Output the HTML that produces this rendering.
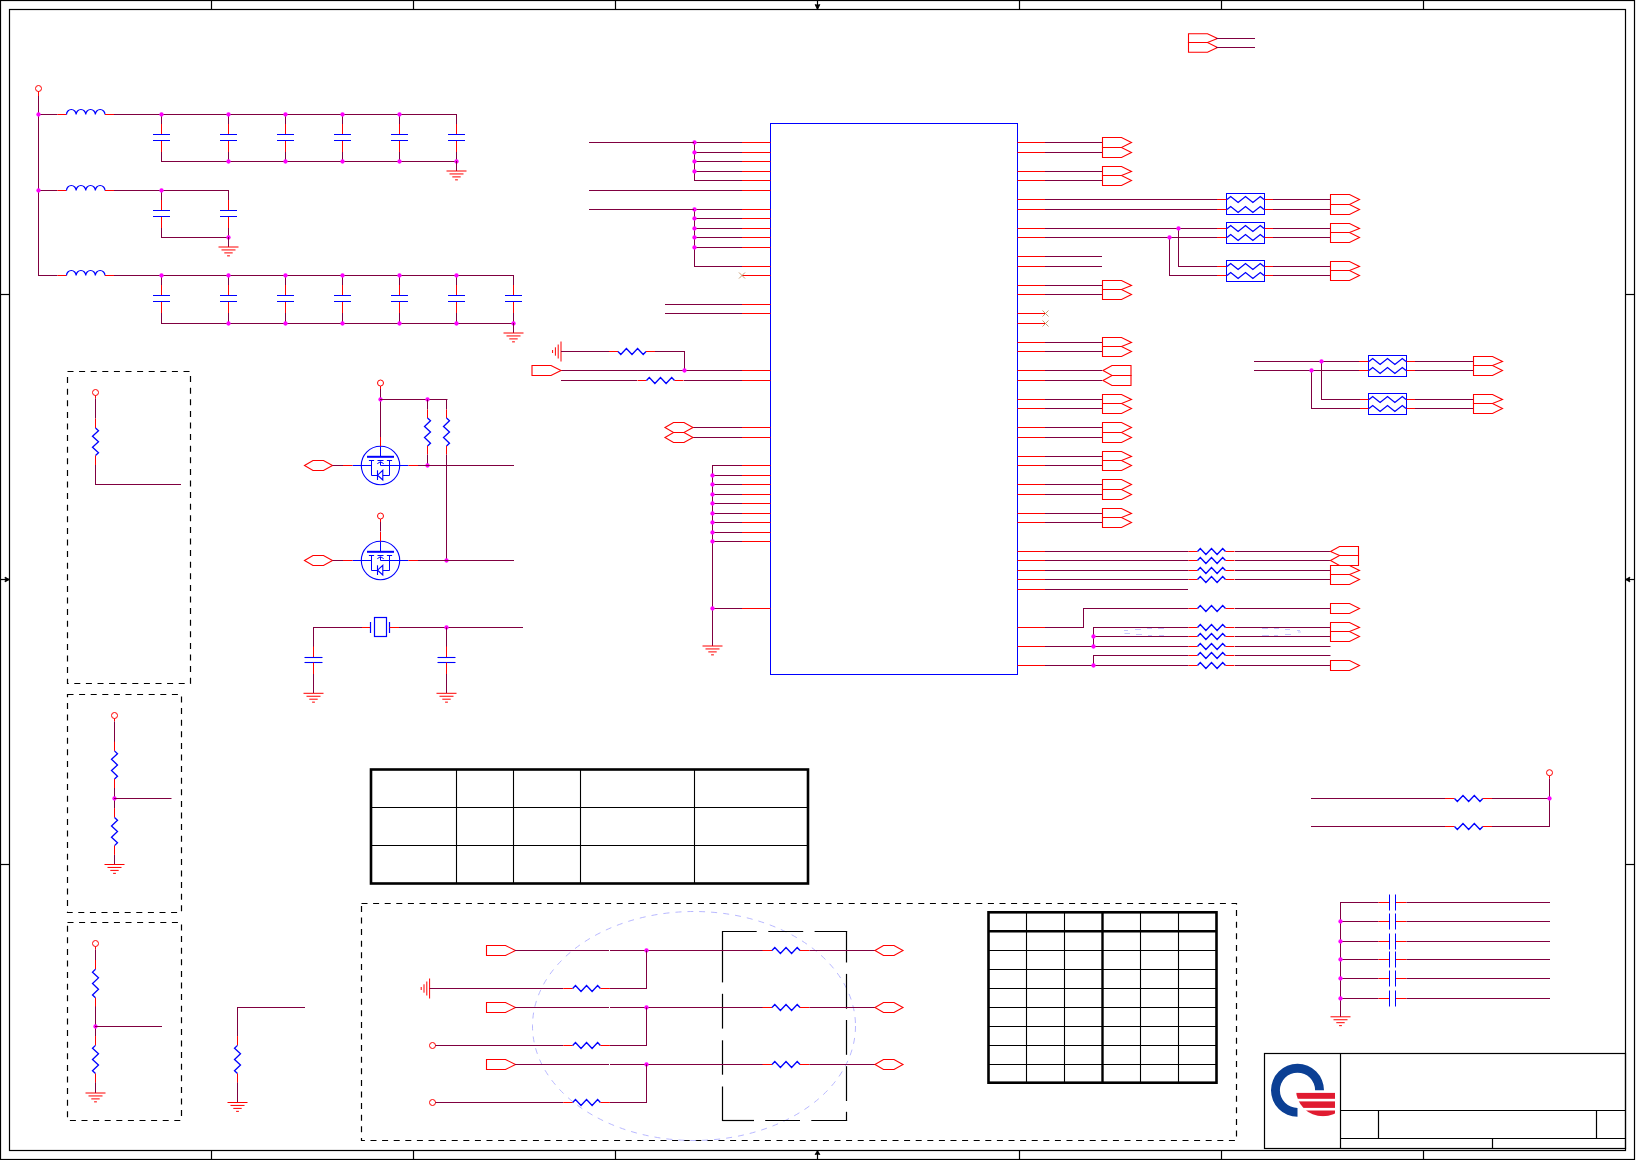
<!DOCTYPE html>
<html><head><meta charset="utf-8"><title>Schematic</title>
<style>html,body{margin:0;padding:0;background:#fff;width:1636px;height:1160px;overflow:hidden}
svg{display:block}</style></head><body>
<svg width="1636" height="1160" viewBox="0 0 1636 1160"><rect x="0.5" y="0.5" width="1634" height="1159" stroke="#000000" stroke-width="1.2" fill="none"/>
<rect x="9.5" y="9.5" width="1616" height="1141" stroke="#000000" stroke-width="1.2" fill="none"/>
<line x1="211.5" y1="0" x2="211.5" y2="10" stroke="#000000" stroke-width="1.2"/>
<line x1="211.5" y1="1150" x2="211.5" y2="1160" stroke="#000000" stroke-width="1.2"/>
<line x1="413.5" y1="0" x2="413.5" y2="10" stroke="#000000" stroke-width="1.2"/>
<line x1="413.5" y1="1150" x2="413.5" y2="1160" stroke="#000000" stroke-width="1.2"/>
<line x1="615.5" y1="0" x2="615.5" y2="10" stroke="#000000" stroke-width="1.2"/>
<line x1="615.5" y1="1150" x2="615.5" y2="1160" stroke="#000000" stroke-width="1.2"/>
<line x1="1019.5" y1="0" x2="1019.5" y2="10" stroke="#000000" stroke-width="1.2"/>
<line x1="1019.5" y1="1150" x2="1019.5" y2="1160" stroke="#000000" stroke-width="1.2"/>
<line x1="1221.5" y1="0" x2="1221.5" y2="10" stroke="#000000" stroke-width="1.2"/>
<line x1="1221.5" y1="1150" x2="1221.5" y2="1160" stroke="#000000" stroke-width="1.2"/>
<line x1="1423.5" y1="0" x2="1423.5" y2="10" stroke="#000000" stroke-width="1.2"/>
<line x1="1423.5" y1="1150" x2="1423.5" y2="1160" stroke="#000000" stroke-width="1.2"/>
<line x1="0" y1="294.5" x2="10" y2="294.5" stroke="#000000" stroke-width="1.2"/>
<line x1="1625" y1="294.5" x2="1635" y2="294.5" stroke="#000000" stroke-width="1.2"/>
<line x1="0" y1="864.5" x2="10" y2="864.5" stroke="#000000" stroke-width="1.2"/>
<line x1="1625" y1="864.5" x2="1635" y2="864.5" stroke="#000000" stroke-width="1.2"/>
<line x1="817.5" y1="0" x2="817.5" y2="9" stroke="#000000" stroke-width="1.2"/>
<polygon points="815.1,4.6 817.5,5.1 819.9,4.6 817.5,9.5" stroke="#000000" stroke-width="0.8" fill="#000000" stroke-linejoin="miter"/>
<line x1="817.5" y1="1150" x2="817.5" y2="1160" stroke="#000000" stroke-width="1.2"/>
<polygon points="815.1,1154.6 817.5,1154.1 819.9,1154.6 817.5,1150.5" stroke="#000000" stroke-width="0.8" fill="#000000" stroke-linejoin="miter"/>
<line x1="0" y1="579.5" x2="9" y2="579.5" stroke="#000000" stroke-width="1.2"/>
<polygon points="5,577.1 5.5,579.5 5,581.9 9.5,579.5" stroke="#000000" stroke-width="0.8" fill="#000000" stroke-linejoin="miter"/>
<line x1="1625" y1="579.5" x2="1635" y2="579.5" stroke="#000000" stroke-width="1.2"/>
<polygon points="1629.8,577.1 1629.3,579.5 1629.8,581.9 1625.5,579.5" stroke="#000000" stroke-width="0.8" fill="#000000" stroke-linejoin="miter"/>
<circle cx="38.5" cy="88.5" r="3" stroke="#ff0000" stroke-width="1" fill="none"/>
<line x1="38.5" y1="91.5" x2="38.5" y2="94.5" stroke="#ff0000" stroke-width="1"/>
<line x1="38.5" y1="91.5" x2="38.5" y2="96" stroke="#ff0000" stroke-width="1"/>
<line x1="38.5" y1="96" x2="38.5" y2="276" stroke="#800040" stroke-width="1"/>
<line x1="38" y1="114.5" x2="57.5" y2="114.5" stroke="#800040" stroke-width="1"/>
<line x1="57.5" y1="114.5" x2="66.5" y2="114.5" stroke="#ff0000" stroke-width="1"/>
<path d="M66.5 114.5 a4.81 5 0 0 1 9.62 0 a4.81 5 0 0 1 9.62 0 a4.81 5 0 0 1 9.62 0 a4.81 5 0 0 1 9.62 0" stroke="#0000ff" fill="none" stroke-width="1.2"/>
<line x1="105" y1="114.5" x2="114" y2="114.5" stroke="#ff0000" stroke-width="1"/>
<line x1="114" y1="114.5" x2="457" y2="114.5" stroke="#800040" stroke-width="1"/>
<line x1="161" y1="161.5" x2="457" y2="161.5" stroke="#800040" stroke-width="1"/>
<line x1="161.5" y1="114.5" x2="161.5" y2="124" stroke="#800040" stroke-width="1"/>
<line x1="161.5" y1="124" x2="161.5" y2="134" stroke="#ff0000" stroke-width="1"/>
<line x1="153" y1="134.5" x2="170" y2="134.5" stroke="#0000ff" stroke-width="1"/>
<line x1="153" y1="140.5" x2="170" y2="140.5" stroke="#0000ff" stroke-width="1"/>
<line x1="161.5" y1="141" x2="161.5" y2="152" stroke="#ff0000" stroke-width="1"/>
<line x1="161.5" y1="152" x2="161.5" y2="161.5" stroke="#800040" stroke-width="1"/>
<line x1="228.5" y1="114.5" x2="228.5" y2="124" stroke="#800040" stroke-width="1"/>
<line x1="228.5" y1="124" x2="228.5" y2="134" stroke="#ff0000" stroke-width="1"/>
<line x1="220" y1="134.5" x2="237" y2="134.5" stroke="#0000ff" stroke-width="1"/>
<line x1="220" y1="140.5" x2="237" y2="140.5" stroke="#0000ff" stroke-width="1"/>
<line x1="228.5" y1="141" x2="228.5" y2="152" stroke="#ff0000" stroke-width="1"/>
<line x1="228.5" y1="152" x2="228.5" y2="161.5" stroke="#800040" stroke-width="1"/>
<line x1="285.5" y1="114.5" x2="285.5" y2="124" stroke="#800040" stroke-width="1"/>
<line x1="285.5" y1="124" x2="285.5" y2="134" stroke="#ff0000" stroke-width="1"/>
<line x1="277" y1="134.5" x2="294" y2="134.5" stroke="#0000ff" stroke-width="1"/>
<line x1="277" y1="140.5" x2="294" y2="140.5" stroke="#0000ff" stroke-width="1"/>
<line x1="285.5" y1="141" x2="285.5" y2="152" stroke="#ff0000" stroke-width="1"/>
<line x1="285.5" y1="152" x2="285.5" y2="161.5" stroke="#800040" stroke-width="1"/>
<line x1="342.5" y1="114.5" x2="342.5" y2="124" stroke="#800040" stroke-width="1"/>
<line x1="342.5" y1="124" x2="342.5" y2="134" stroke="#ff0000" stroke-width="1"/>
<line x1="334" y1="134.5" x2="351" y2="134.5" stroke="#0000ff" stroke-width="1"/>
<line x1="334" y1="140.5" x2="351" y2="140.5" stroke="#0000ff" stroke-width="1"/>
<line x1="342.5" y1="141" x2="342.5" y2="152" stroke="#ff0000" stroke-width="1"/>
<line x1="342.5" y1="152" x2="342.5" y2="161.5" stroke="#800040" stroke-width="1"/>
<line x1="399.5" y1="114.5" x2="399.5" y2="124" stroke="#800040" stroke-width="1"/>
<line x1="399.5" y1="124" x2="399.5" y2="134" stroke="#ff0000" stroke-width="1"/>
<line x1="391" y1="134.5" x2="408" y2="134.5" stroke="#0000ff" stroke-width="1"/>
<line x1="391" y1="140.5" x2="408" y2="140.5" stroke="#0000ff" stroke-width="1"/>
<line x1="399.5" y1="141" x2="399.5" y2="152" stroke="#ff0000" stroke-width="1"/>
<line x1="399.5" y1="152" x2="399.5" y2="161.5" stroke="#800040" stroke-width="1"/>
<line x1="456.5" y1="114.5" x2="456.5" y2="124" stroke="#800040" stroke-width="1"/>
<line x1="456.5" y1="124" x2="456.5" y2="134" stroke="#ff0000" stroke-width="1"/>
<line x1="448" y1="134.5" x2="465" y2="134.5" stroke="#0000ff" stroke-width="1"/>
<line x1="448" y1="140.5" x2="465" y2="140.5" stroke="#0000ff" stroke-width="1"/>
<line x1="456.5" y1="141" x2="456.5" y2="152" stroke="#ff0000" stroke-width="1"/>
<line x1="456.5" y1="152" x2="456.5" y2="161.5" stroke="#800040" stroke-width="1"/>
<circle cx="161.5" cy="114.5" r="2.15" fill="#ff00ff"/>
<circle cx="228.5" cy="114.5" r="2.15" fill="#ff00ff"/>
<circle cx="285.5" cy="114.5" r="2.15" fill="#ff00ff"/>
<circle cx="342.5" cy="114.5" r="2.15" fill="#ff00ff"/>
<circle cx="399.5" cy="114.5" r="2.15" fill="#ff00ff"/>
<circle cx="228.5" cy="161.5" r="2.15" fill="#ff00ff"/>
<circle cx="285.5" cy="161.5" r="2.15" fill="#ff00ff"/>
<circle cx="342.5" cy="161.5" r="2.15" fill="#ff00ff"/>
<circle cx="399.5" cy="161.5" r="2.15" fill="#ff00ff"/>
<circle cx="456.5" cy="161.5" r="2.15" fill="#ff00ff"/>
<line x1="456.5" y1="161" x2="456.5" y2="171" stroke="#800040" stroke-width="1"/>
<line x1="446.5" y1="171" x2="466.5" y2="171" stroke="#ff0000" stroke-width="1"/>
<line x1="449.5" y1="173.95" x2="463.5" y2="173.95" stroke="#ff0000" stroke-width="1"/>
<line x1="452.3" y1="176.9" x2="460.7" y2="176.9" stroke="#ff0000" stroke-width="1"/>
<line x1="455.1" y1="179.85" x2="457.9" y2="179.85" stroke="#ff0000" stroke-width="1"/>
<line x1="38" y1="190.5" x2="57.5" y2="190.5" stroke="#800040" stroke-width="1"/>
<line x1="57.5" y1="190.5" x2="66.5" y2="190.5" stroke="#ff0000" stroke-width="1"/>
<path d="M66.5 190.5 a4.81 5 0 0 1 9.62 0 a4.81 5 0 0 1 9.62 0 a4.81 5 0 0 1 9.62 0 a4.81 5 0 0 1 9.62 0" stroke="#0000ff" fill="none" stroke-width="1.2"/>
<line x1="105" y1="190.5" x2="114" y2="190.5" stroke="#ff0000" stroke-width="1"/>
<line x1="114" y1="190.5" x2="229" y2="190.5" stroke="#800040" stroke-width="1"/>
<line x1="161" y1="237.5" x2="229" y2="237.5" stroke="#800040" stroke-width="1"/>
<line x1="161.5" y1="190.5" x2="161.5" y2="200" stroke="#800040" stroke-width="1"/>
<line x1="161.5" y1="200" x2="161.5" y2="210" stroke="#ff0000" stroke-width="1"/>
<line x1="153" y1="210.5" x2="170" y2="210.5" stroke="#0000ff" stroke-width="1"/>
<line x1="153" y1="216.5" x2="170" y2="216.5" stroke="#0000ff" stroke-width="1"/>
<line x1="161.5" y1="217" x2="161.5" y2="228" stroke="#ff0000" stroke-width="1"/>
<line x1="161.5" y1="228" x2="161.5" y2="237.5" stroke="#800040" stroke-width="1"/>
<line x1="228.5" y1="190.5" x2="228.5" y2="200" stroke="#800040" stroke-width="1"/>
<line x1="228.5" y1="200" x2="228.5" y2="210" stroke="#ff0000" stroke-width="1"/>
<line x1="220" y1="210.5" x2="237" y2="210.5" stroke="#0000ff" stroke-width="1"/>
<line x1="220" y1="216.5" x2="237" y2="216.5" stroke="#0000ff" stroke-width="1"/>
<line x1="228.5" y1="217" x2="228.5" y2="228" stroke="#ff0000" stroke-width="1"/>
<line x1="228.5" y1="228" x2="228.5" y2="237.5" stroke="#800040" stroke-width="1"/>
<circle cx="161.5" cy="190.5" r="2.15" fill="#ff00ff"/>
<circle cx="228.5" cy="237.5" r="2.15" fill="#ff00ff"/>
<line x1="228.5" y1="237" x2="228.5" y2="247" stroke="#800040" stroke-width="1"/>
<line x1="218.5" y1="247" x2="238.5" y2="247" stroke="#ff0000" stroke-width="1"/>
<line x1="221.5" y1="249.95" x2="235.5" y2="249.95" stroke="#ff0000" stroke-width="1"/>
<line x1="224.3" y1="252.9" x2="232.7" y2="252.9" stroke="#ff0000" stroke-width="1"/>
<line x1="227.1" y1="255.85" x2="229.9" y2="255.85" stroke="#ff0000" stroke-width="1"/>
<line x1="38" y1="275.5" x2="57.5" y2="275.5" stroke="#800040" stroke-width="1"/>
<line x1="57.5" y1="275.5" x2="66.5" y2="275.5" stroke="#ff0000" stroke-width="1"/>
<path d="M66.5 275.5 a4.81 5 0 0 1 9.62 0 a4.81 5 0 0 1 9.62 0 a4.81 5 0 0 1 9.62 0 a4.81 5 0 0 1 9.62 0" stroke="#0000ff" fill="none" stroke-width="1.2"/>
<line x1="105" y1="275.5" x2="114" y2="275.5" stroke="#ff0000" stroke-width="1"/>
<line x1="114" y1="275.5" x2="514" y2="275.5" stroke="#800040" stroke-width="1"/>
<line x1="161" y1="323.5" x2="514" y2="323.5" stroke="#800040" stroke-width="1"/>
<line x1="161.5" y1="275.5" x2="161.5" y2="285" stroke="#800040" stroke-width="1"/>
<line x1="161.5" y1="285" x2="161.5" y2="295" stroke="#ff0000" stroke-width="1"/>
<line x1="153" y1="295.5" x2="170" y2="295.5" stroke="#0000ff" stroke-width="1"/>
<line x1="153" y1="301.5" x2="170" y2="301.5" stroke="#0000ff" stroke-width="1"/>
<line x1="161.5" y1="302" x2="161.5" y2="313" stroke="#ff0000" stroke-width="1"/>
<line x1="161.5" y1="313" x2="161.5" y2="323.5" stroke="#800040" stroke-width="1"/>
<line x1="228.5" y1="275.5" x2="228.5" y2="285" stroke="#800040" stroke-width="1"/>
<line x1="228.5" y1="285" x2="228.5" y2="295" stroke="#ff0000" stroke-width="1"/>
<line x1="220" y1="295.5" x2="237" y2="295.5" stroke="#0000ff" stroke-width="1"/>
<line x1="220" y1="301.5" x2="237" y2="301.5" stroke="#0000ff" stroke-width="1"/>
<line x1="228.5" y1="302" x2="228.5" y2="313" stroke="#ff0000" stroke-width="1"/>
<line x1="228.5" y1="313" x2="228.5" y2="323.5" stroke="#800040" stroke-width="1"/>
<line x1="285.5" y1="275.5" x2="285.5" y2="285" stroke="#800040" stroke-width="1"/>
<line x1="285.5" y1="285" x2="285.5" y2="295" stroke="#ff0000" stroke-width="1"/>
<line x1="277" y1="295.5" x2="294" y2="295.5" stroke="#0000ff" stroke-width="1"/>
<line x1="277" y1="301.5" x2="294" y2="301.5" stroke="#0000ff" stroke-width="1"/>
<line x1="285.5" y1="302" x2="285.5" y2="313" stroke="#ff0000" stroke-width="1"/>
<line x1="285.5" y1="313" x2="285.5" y2="323.5" stroke="#800040" stroke-width="1"/>
<line x1="342.5" y1="275.5" x2="342.5" y2="285" stroke="#800040" stroke-width="1"/>
<line x1="342.5" y1="285" x2="342.5" y2="295" stroke="#ff0000" stroke-width="1"/>
<line x1="334" y1="295.5" x2="351" y2="295.5" stroke="#0000ff" stroke-width="1"/>
<line x1="334" y1="301.5" x2="351" y2="301.5" stroke="#0000ff" stroke-width="1"/>
<line x1="342.5" y1="302" x2="342.5" y2="313" stroke="#ff0000" stroke-width="1"/>
<line x1="342.5" y1="313" x2="342.5" y2="323.5" stroke="#800040" stroke-width="1"/>
<line x1="399.5" y1="275.5" x2="399.5" y2="285" stroke="#800040" stroke-width="1"/>
<line x1="399.5" y1="285" x2="399.5" y2="295" stroke="#ff0000" stroke-width="1"/>
<line x1="391" y1="295.5" x2="408" y2="295.5" stroke="#0000ff" stroke-width="1"/>
<line x1="391" y1="301.5" x2="408" y2="301.5" stroke="#0000ff" stroke-width="1"/>
<line x1="399.5" y1="302" x2="399.5" y2="313" stroke="#ff0000" stroke-width="1"/>
<line x1="399.5" y1="313" x2="399.5" y2="323.5" stroke="#800040" stroke-width="1"/>
<line x1="456.5" y1="275.5" x2="456.5" y2="285" stroke="#800040" stroke-width="1"/>
<line x1="456.5" y1="285" x2="456.5" y2="295" stroke="#ff0000" stroke-width="1"/>
<line x1="448" y1="295.5" x2="465" y2="295.5" stroke="#0000ff" stroke-width="1"/>
<line x1="448" y1="301.5" x2="465" y2="301.5" stroke="#0000ff" stroke-width="1"/>
<line x1="456.5" y1="302" x2="456.5" y2="313" stroke="#ff0000" stroke-width="1"/>
<line x1="456.5" y1="313" x2="456.5" y2="323.5" stroke="#800040" stroke-width="1"/>
<line x1="513.5" y1="275.5" x2="513.5" y2="285" stroke="#800040" stroke-width="1"/>
<line x1="513.5" y1="285" x2="513.5" y2="295" stroke="#ff0000" stroke-width="1"/>
<line x1="505" y1="295.5" x2="522" y2="295.5" stroke="#0000ff" stroke-width="1"/>
<line x1="505" y1="301.5" x2="522" y2="301.5" stroke="#0000ff" stroke-width="1"/>
<line x1="513.5" y1="302" x2="513.5" y2="313" stroke="#ff0000" stroke-width="1"/>
<line x1="513.5" y1="313" x2="513.5" y2="323.5" stroke="#800040" stroke-width="1"/>
<circle cx="161.5" cy="275.5" r="2.15" fill="#ff00ff"/>
<circle cx="228.5" cy="275.5" r="2.15" fill="#ff00ff"/>
<circle cx="285.5" cy="275.5" r="2.15" fill="#ff00ff"/>
<circle cx="342.5" cy="275.5" r="2.15" fill="#ff00ff"/>
<circle cx="399.5" cy="275.5" r="2.15" fill="#ff00ff"/>
<circle cx="456.5" cy="275.5" r="2.15" fill="#ff00ff"/>
<circle cx="228.5" cy="323.5" r="2.15" fill="#ff00ff"/>
<circle cx="285.5" cy="323.5" r="2.15" fill="#ff00ff"/>
<circle cx="342.5" cy="323.5" r="2.15" fill="#ff00ff"/>
<circle cx="399.5" cy="323.5" r="2.15" fill="#ff00ff"/>
<circle cx="456.5" cy="323.5" r="2.15" fill="#ff00ff"/>
<circle cx="513.5" cy="323.5" r="2.15" fill="#ff00ff"/>
<line x1="513.5" y1="323" x2="513.5" y2="333" stroke="#800040" stroke-width="1"/>
<line x1="503.5" y1="333" x2="523.5" y2="333" stroke="#ff0000" stroke-width="1"/>
<line x1="506.5" y1="335.95" x2="520.5" y2="335.95" stroke="#ff0000" stroke-width="1"/>
<line x1="509.3" y1="338.9" x2="517.7" y2="338.9" stroke="#ff0000" stroke-width="1"/>
<line x1="512.1" y1="341.85" x2="514.9" y2="341.85" stroke="#ff0000" stroke-width="1"/>
<circle cx="38.5" cy="114.5" r="2.15" fill="#ff00ff"/>
<circle cx="38.5" cy="190.5" r="2.15" fill="#ff00ff"/>
<rect x="770.5" y="123.5" width="247" height="551" stroke="#0000ff" stroke-width="1" fill="none"/>
<line x1="742" y1="142.5" x2="770.5" y2="142.5" stroke="#ff0000" stroke-width="1"/>
<line x1="742" y1="152.5" x2="770.5" y2="152.5" stroke="#ff0000" stroke-width="1"/>
<line x1="742" y1="161.5" x2="770.5" y2="161.5" stroke="#ff0000" stroke-width="1"/>
<line x1="742" y1="171.5" x2="770.5" y2="171.5" stroke="#ff0000" stroke-width="1"/>
<line x1="742" y1="180.5" x2="770.5" y2="180.5" stroke="#ff0000" stroke-width="1"/>
<line x1="742" y1="190.5" x2="770.5" y2="190.5" stroke="#ff0000" stroke-width="1"/>
<line x1="742" y1="209.5" x2="770.5" y2="209.5" stroke="#ff0000" stroke-width="1"/>
<line x1="742" y1="218.5" x2="770.5" y2="218.5" stroke="#ff0000" stroke-width="1"/>
<line x1="742" y1="228.5" x2="770.5" y2="228.5" stroke="#ff0000" stroke-width="1"/>
<line x1="742" y1="237.5" x2="770.5" y2="237.5" stroke="#ff0000" stroke-width="1"/>
<line x1="742" y1="247.5" x2="770.5" y2="247.5" stroke="#ff0000" stroke-width="1"/>
<line x1="742" y1="266.5" x2="770.5" y2="266.5" stroke="#ff0000" stroke-width="1"/>
<line x1="742" y1="275.5" x2="770.5" y2="275.5" stroke="#ff0000" stroke-width="1"/>
<line x1="739" y1="272.5" x2="745" y2="278.5" stroke="#c09060" stroke-width="0.9"/>
<line x1="739" y1="278.5" x2="745" y2="272.5" stroke="#c09060" stroke-width="0.9"/>
<line x1="694" y1="142.5" x2="742" y2="142.5" stroke="#800040" stroke-width="1"/>
<line x1="694" y1="152.5" x2="742" y2="152.5" stroke="#800040" stroke-width="1"/>
<line x1="694" y1="161.5" x2="742" y2="161.5" stroke="#800040" stroke-width="1"/>
<line x1="694" y1="171.5" x2="742" y2="171.5" stroke="#800040" stroke-width="1"/>
<line x1="694" y1="180.5" x2="742" y2="180.5" stroke="#800040" stroke-width="1"/>
<line x1="694.5" y1="142.5" x2="694.5" y2="181" stroke="#800040" stroke-width="1"/>
<circle cx="694.5" cy="142.5" r="2.15" fill="#ff00ff"/>
<circle cx="694.5" cy="152.5" r="2.15" fill="#ff00ff"/>
<circle cx="694.5" cy="161.5" r="2.15" fill="#ff00ff"/>
<circle cx="694.5" cy="171.5" r="2.15" fill="#ff00ff"/>
<line x1="589" y1="142.5" x2="694" y2="142.5" stroke="#800040" stroke-width="1"/>
<line x1="589" y1="190.5" x2="742" y2="190.5" stroke="#800040" stroke-width="1"/>
<line x1="694" y1="209.5" x2="742" y2="209.5" stroke="#800040" stroke-width="1"/>
<line x1="694" y1="218.5" x2="742" y2="218.5" stroke="#800040" stroke-width="1"/>
<line x1="694" y1="228.5" x2="742" y2="228.5" stroke="#800040" stroke-width="1"/>
<line x1="694" y1="237.5" x2="742" y2="237.5" stroke="#800040" stroke-width="1"/>
<line x1="694" y1="247.5" x2="742" y2="247.5" stroke="#800040" stroke-width="1"/>
<line x1="694" y1="266.5" x2="742" y2="266.5" stroke="#800040" stroke-width="1"/>
<line x1="694.5" y1="209.5" x2="694.5" y2="267" stroke="#800040" stroke-width="1"/>
<circle cx="694.5" cy="209.5" r="2.15" fill="#ff00ff"/>
<circle cx="694.5" cy="218.5" r="2.15" fill="#ff00ff"/>
<circle cx="694.5" cy="228.5" r="2.15" fill="#ff00ff"/>
<circle cx="694.5" cy="237.5" r="2.15" fill="#ff00ff"/>
<circle cx="694.5" cy="247.5" r="2.15" fill="#ff00ff"/>
<line x1="589" y1="209.5" x2="694" y2="209.5" stroke="#800040" stroke-width="1"/>
<line x1="742" y1="304.5" x2="770.5" y2="304.5" stroke="#ff0000" stroke-width="1"/>
<line x1="665" y1="304.5" x2="742" y2="304.5" stroke="#800040" stroke-width="1"/>
<line x1="742" y1="313.5" x2="770.5" y2="313.5" stroke="#ff0000" stroke-width="1"/>
<line x1="665" y1="313.5" x2="742" y2="313.5" stroke="#800040" stroke-width="1"/>
<line x1="561" y1="341.5" x2="561" y2="361.5" stroke="#ff0000" stroke-width="1"/>
<line x1="558.2" y1="344.5" x2="558.2" y2="358.5" stroke="#ff0000" stroke-width="1"/>
<line x1="555.4" y1="347.3" x2="555.4" y2="355.7" stroke="#ff0000" stroke-width="1"/>
<line x1="552.6" y1="350" x2="552.6" y2="353" stroke="#ff0000" stroke-width="1"/>
<line x1="561" y1="351.5" x2="609" y2="351.5" stroke="#800040" stroke-width="1"/>
<line x1="609" y1="351.5" x2="618" y2="351.5" stroke="#ff0000" stroke-width="1"/>
<polyline points="618,351.5 620.8,354.5 626.4,348.5 632,354.5 637.6,348.5 643.2,354.5 646,351.5" stroke="#0000ff" stroke-width="1.3" fill="none" stroke-linejoin="miter"/>
<line x1="646" y1="351.5" x2="655" y2="351.5" stroke="#ff0000" stroke-width="1"/>
<line x1="655" y1="351.5" x2="685" y2="351.5" stroke="#800040" stroke-width="1"/>
<line x1="684.5" y1="351.5" x2="684.5" y2="370.5" stroke="#800040" stroke-width="1"/>
<line x1="742" y1="370.5" x2="770.5" y2="370.5" stroke="#ff0000" stroke-width="1"/>
<line x1="561" y1="370.5" x2="742" y2="370.5" stroke="#800040" stroke-width="1"/>
<polygon points="532,365.5 551,365.5 561,370.5 551,375.5 532,375.5" stroke="#ff0000" stroke-width="1.1" fill="none" stroke-linejoin="miter"/>
<circle cx="684.5" cy="370.5" r="2.15" fill="#ff00ff"/>
<line x1="742" y1="380.5" x2="770.5" y2="380.5" stroke="#ff0000" stroke-width="1"/>
<line x1="561" y1="380.5" x2="637" y2="380.5" stroke="#800040" stroke-width="1"/>
<line x1="637.5" y1="380.5" x2="646.5" y2="380.5" stroke="#ff0000" stroke-width="1"/>
<polyline points="646.5,380.5 649.3,377.5 654.9,383.5 660.5,377.5 666.1,383.5 671.7,377.5 674.5,380.5" stroke="#0000ff" stroke-width="1.3" fill="none" stroke-linejoin="miter"/>
<line x1="674.5" y1="380.5" x2="683.5" y2="380.5" stroke="#ff0000" stroke-width="1"/>
<line x1="684" y1="380.5" x2="742" y2="380.5" stroke="#800040" stroke-width="1"/>
<line x1="742" y1="427.5" x2="770.5" y2="427.5" stroke="#ff0000" stroke-width="1"/>
<line x1="693" y1="427.5" x2="742" y2="427.5" stroke="#800040" stroke-width="1"/>
<line x1="742" y1="437.5" x2="770.5" y2="437.5" stroke="#ff0000" stroke-width="1"/>
<line x1="693" y1="437.5" x2="742" y2="437.5" stroke="#800040" stroke-width="1"/>
<polygon points="665,427.5 673.5,422.5 684,422.5 693,427.5 684,432.5 673.5,432.5" stroke="#ff0000" stroke-width="1.1" fill="none" stroke-linejoin="miter"/>
<polygon points="665,437.5 673.5,432.5 684,432.5 693,437.5 684,442.5 673.5,442.5" stroke="#ff0000" stroke-width="1.1" fill="none" stroke-linejoin="miter"/>
<line x1="742" y1="465.5" x2="770.5" y2="465.5" stroke="#ff0000" stroke-width="1"/>
<line x1="712" y1="465.5" x2="742" y2="465.5" stroke="#800040" stroke-width="1"/>
<line x1="742" y1="475.5" x2="770.5" y2="475.5" stroke="#ff0000" stroke-width="1"/>
<line x1="712" y1="475.5" x2="742" y2="475.5" stroke="#800040" stroke-width="1"/>
<line x1="742" y1="484.5" x2="770.5" y2="484.5" stroke="#ff0000" stroke-width="1"/>
<line x1="712" y1="484.5" x2="742" y2="484.5" stroke="#800040" stroke-width="1"/>
<line x1="742" y1="494.5" x2="770.5" y2="494.5" stroke="#ff0000" stroke-width="1"/>
<line x1="712" y1="494.5" x2="742" y2="494.5" stroke="#800040" stroke-width="1"/>
<line x1="742" y1="503.5" x2="770.5" y2="503.5" stroke="#ff0000" stroke-width="1"/>
<line x1="712" y1="503.5" x2="742" y2="503.5" stroke="#800040" stroke-width="1"/>
<line x1="742" y1="513.5" x2="770.5" y2="513.5" stroke="#ff0000" stroke-width="1"/>
<line x1="712" y1="513.5" x2="742" y2="513.5" stroke="#800040" stroke-width="1"/>
<line x1="742" y1="522.5" x2="770.5" y2="522.5" stroke="#ff0000" stroke-width="1"/>
<line x1="712" y1="522.5" x2="742" y2="522.5" stroke="#800040" stroke-width="1"/>
<line x1="742" y1="532.5" x2="770.5" y2="532.5" stroke="#ff0000" stroke-width="1"/>
<line x1="712" y1="532.5" x2="742" y2="532.5" stroke="#800040" stroke-width="1"/>
<line x1="742" y1="541.5" x2="770.5" y2="541.5" stroke="#ff0000" stroke-width="1"/>
<line x1="712" y1="541.5" x2="742" y2="541.5" stroke="#800040" stroke-width="1"/>
<line x1="742" y1="608.5" x2="770.5" y2="608.5" stroke="#ff0000" stroke-width="1"/>
<line x1="712" y1="608.5" x2="742" y2="608.5" stroke="#800040" stroke-width="1"/>
<line x1="712.5" y1="465.5" x2="712.5" y2="646" stroke="#800040" stroke-width="1"/>
<circle cx="712.5" cy="475.5" r="2.15" fill="#ff00ff"/>
<circle cx="712.5" cy="484.5" r="2.15" fill="#ff00ff"/>
<circle cx="712.5" cy="494.5" r="2.15" fill="#ff00ff"/>
<circle cx="712.5" cy="503.5" r="2.15" fill="#ff00ff"/>
<circle cx="712.5" cy="513.5" r="2.15" fill="#ff00ff"/>
<circle cx="712.5" cy="522.5" r="2.15" fill="#ff00ff"/>
<circle cx="712.5" cy="532.5" r="2.15" fill="#ff00ff"/>
<circle cx="712.5" cy="541.5" r="2.15" fill="#ff00ff"/>
<circle cx="712.5" cy="608.5" r="2.15" fill="#ff00ff"/>
<line x1="702.5" y1="646" x2="722.5" y2="646" stroke="#ff0000" stroke-width="1"/>
<line x1="705.5" y1="648.95" x2="719.5" y2="648.95" stroke="#ff0000" stroke-width="1"/>
<line x1="708.3" y1="651.9" x2="716.7" y2="651.9" stroke="#ff0000" stroke-width="1"/>
<line x1="711.1" y1="654.85" x2="713.9" y2="654.85" stroke="#ff0000" stroke-width="1"/>
<line x1="1017.5" y1="142.5" x2="1045" y2="142.5" stroke="#ff0000" stroke-width="1"/>
<line x1="1045" y1="142.5" x2="1102" y2="142.5" stroke="#800040" stroke-width="1"/>
<line x1="1017.5" y1="152.5" x2="1045" y2="152.5" stroke="#ff0000" stroke-width="1"/>
<line x1="1045" y1="152.5" x2="1102" y2="152.5" stroke="#800040" stroke-width="1"/>
<line x1="1017.5" y1="171.5" x2="1045" y2="171.5" stroke="#ff0000" stroke-width="1"/>
<line x1="1045" y1="171.5" x2="1102" y2="171.5" stroke="#800040" stroke-width="1"/>
<line x1="1017.5" y1="180.5" x2="1045" y2="180.5" stroke="#ff0000" stroke-width="1"/>
<line x1="1045" y1="180.5" x2="1102" y2="180.5" stroke="#800040" stroke-width="1"/>
<polygon points="1102.5,137.5 1121.5,137.5 1131.5,142.5 1121.5,147.5 1102.5,147.5" stroke="#ff0000" stroke-width="1.1" fill="none" stroke-linejoin="miter"/>
<polygon points="1102.5,147.5 1121.5,147.5 1131.5,152.5 1121.5,157.5 1102.5,157.5" stroke="#ff0000" stroke-width="1.1" fill="none" stroke-linejoin="miter"/>
<polygon points="1102.5,166.5 1121.5,166.5 1131.5,171.5 1121.5,175.5 1102.5,175.5" stroke="#ff0000" stroke-width="1.1" fill="none" stroke-linejoin="miter"/>
<polygon points="1102.5,175.5 1121.5,175.5 1131.5,180.5 1121.5,185.5 1102.5,185.5" stroke="#ff0000" stroke-width="1.1" fill="none" stroke-linejoin="miter"/>
<line x1="1017.5" y1="199.5" x2="1045" y2="199.5" stroke="#ff0000" stroke-width="1"/>
<line x1="1045" y1="199.5" x2="1217" y2="199.5" stroke="#800040" stroke-width="1"/>
<line x1="1017.5" y1="209.5" x2="1045" y2="209.5" stroke="#ff0000" stroke-width="1"/>
<line x1="1045" y1="209.5" x2="1217" y2="209.5" stroke="#800040" stroke-width="1"/>
<line x1="1017.5" y1="228.5" x2="1045" y2="228.5" stroke="#ff0000" stroke-width="1"/>
<line x1="1045" y1="228.5" x2="1217" y2="228.5" stroke="#800040" stroke-width="1"/>
<line x1="1017.5" y1="237.5" x2="1045" y2="237.5" stroke="#ff0000" stroke-width="1"/>
<line x1="1045" y1="237.5" x2="1217" y2="237.5" stroke="#800040" stroke-width="1"/>
<line x1="1017.5" y1="256.5" x2="1045" y2="256.5" stroke="#ff0000" stroke-width="1"/>
<line x1="1045" y1="256.5" x2="1102" y2="256.5" stroke="#800040" stroke-width="1"/>
<line x1="1017.5" y1="266.5" x2="1045" y2="266.5" stroke="#ff0000" stroke-width="1"/>
<line x1="1045" y1="266.5" x2="1102" y2="266.5" stroke="#800040" stroke-width="1"/>
<line x1="1017.5" y1="285.5" x2="1045" y2="285.5" stroke="#ff0000" stroke-width="1"/>
<line x1="1045" y1="285.5" x2="1102" y2="285.5" stroke="#800040" stroke-width="1"/>
<line x1="1017.5" y1="294.5" x2="1045" y2="294.5" stroke="#ff0000" stroke-width="1"/>
<line x1="1045" y1="294.5" x2="1102" y2="294.5" stroke="#800040" stroke-width="1"/>
<polygon points="1102.5,280.5 1121.5,280.5 1131.5,285.5 1121.5,289.5 1102.5,289.5" stroke="#ff0000" stroke-width="1.1" fill="none" stroke-linejoin="miter"/>
<polygon points="1102.5,289.5 1121.5,289.5 1131.5,294.5 1121.5,299.5 1102.5,299.5" stroke="#ff0000" stroke-width="1.1" fill="none" stroke-linejoin="miter"/>
<line x1="1017.5" y1="313.5" x2="1045" y2="313.5" stroke="#ff0000" stroke-width="1"/>
<line x1="1042.5" y1="310.5" x2="1048.5" y2="316.5" stroke="#c09060" stroke-width="0.9"/>
<line x1="1042.5" y1="316.5" x2="1048.5" y2="310.5" stroke="#c09060" stroke-width="0.9"/>
<line x1="1017.5" y1="323.5" x2="1045" y2="323.5" stroke="#ff0000" stroke-width="1"/>
<line x1="1042.5" y1="320.5" x2="1048.5" y2="326.5" stroke="#c09060" stroke-width="0.9"/>
<line x1="1042.5" y1="326.5" x2="1048.5" y2="320.5" stroke="#c09060" stroke-width="0.9"/>
<line x1="1017.5" y1="342.5" x2="1045" y2="342.5" stroke="#ff0000" stroke-width="1"/>
<line x1="1045" y1="342.5" x2="1102" y2="342.5" stroke="#800040" stroke-width="1"/>
<line x1="1017.5" y1="351.5" x2="1045" y2="351.5" stroke="#ff0000" stroke-width="1"/>
<line x1="1045" y1="351.5" x2="1102" y2="351.5" stroke="#800040" stroke-width="1"/>
<line x1="1017.5" y1="399.5" x2="1045" y2="399.5" stroke="#ff0000" stroke-width="1"/>
<line x1="1045" y1="399.5" x2="1102" y2="399.5" stroke="#800040" stroke-width="1"/>
<line x1="1017.5" y1="408.5" x2="1045" y2="408.5" stroke="#ff0000" stroke-width="1"/>
<line x1="1045" y1="408.5" x2="1102" y2="408.5" stroke="#800040" stroke-width="1"/>
<line x1="1017.5" y1="427.5" x2="1045" y2="427.5" stroke="#ff0000" stroke-width="1"/>
<line x1="1045" y1="427.5" x2="1102" y2="427.5" stroke="#800040" stroke-width="1"/>
<line x1="1017.5" y1="437.5" x2="1045" y2="437.5" stroke="#ff0000" stroke-width="1"/>
<line x1="1045" y1="437.5" x2="1102" y2="437.5" stroke="#800040" stroke-width="1"/>
<line x1="1017.5" y1="456.5" x2="1045" y2="456.5" stroke="#ff0000" stroke-width="1"/>
<line x1="1045" y1="456.5" x2="1102" y2="456.5" stroke="#800040" stroke-width="1"/>
<line x1="1017.5" y1="465.5" x2="1045" y2="465.5" stroke="#ff0000" stroke-width="1"/>
<line x1="1045" y1="465.5" x2="1102" y2="465.5" stroke="#800040" stroke-width="1"/>
<line x1="1017.5" y1="484.5" x2="1045" y2="484.5" stroke="#ff0000" stroke-width="1"/>
<line x1="1045" y1="484.5" x2="1102" y2="484.5" stroke="#800040" stroke-width="1"/>
<line x1="1017.5" y1="494.5" x2="1045" y2="494.5" stroke="#ff0000" stroke-width="1"/>
<line x1="1045" y1="494.5" x2="1102" y2="494.5" stroke="#800040" stroke-width="1"/>
<line x1="1017.5" y1="513.5" x2="1045" y2="513.5" stroke="#ff0000" stroke-width="1"/>
<line x1="1045" y1="513.5" x2="1102" y2="513.5" stroke="#800040" stroke-width="1"/>
<line x1="1017.5" y1="522.5" x2="1045" y2="522.5" stroke="#ff0000" stroke-width="1"/>
<line x1="1045" y1="522.5" x2="1102" y2="522.5" stroke="#800040" stroke-width="1"/>
<polygon points="1102.5,337.5 1121.5,337.5 1131.5,342.5 1121.5,346.5 1102.5,346.5" stroke="#ff0000" stroke-width="1.1" fill="none" stroke-linejoin="miter"/>
<polygon points="1102.5,346.5 1121.5,346.5 1131.5,351.5 1121.5,356.5 1102.5,356.5" stroke="#ff0000" stroke-width="1.1" fill="none" stroke-linejoin="miter"/>
<polygon points="1102.5,394.5 1121.5,394.5 1131.5,399.5 1121.5,403.5 1102.5,403.5" stroke="#ff0000" stroke-width="1.1" fill="none" stroke-linejoin="miter"/>
<polygon points="1102.5,403.5 1121.5,403.5 1131.5,408.5 1121.5,413.5 1102.5,413.5" stroke="#ff0000" stroke-width="1.1" fill="none" stroke-linejoin="miter"/>
<polygon points="1102.5,422.5 1121.5,422.5 1131.5,427.5 1121.5,432.5 1102.5,432.5" stroke="#ff0000" stroke-width="1.1" fill="none" stroke-linejoin="miter"/>
<polygon points="1102.5,432.5 1121.5,432.5 1131.5,437.5 1121.5,442.5 1102.5,442.5" stroke="#ff0000" stroke-width="1.1" fill="none" stroke-linejoin="miter"/>
<polygon points="1102.5,451.5 1121.5,451.5 1131.5,456.5 1121.5,460.5 1102.5,460.5" stroke="#ff0000" stroke-width="1.1" fill="none" stroke-linejoin="miter"/>
<polygon points="1102.5,460.5 1121.5,460.5 1131.5,465.5 1121.5,470.5 1102.5,470.5" stroke="#ff0000" stroke-width="1.1" fill="none" stroke-linejoin="miter"/>
<polygon points="1102.5,479.5 1121.5,479.5 1131.5,484.5 1121.5,489.5 1102.5,489.5" stroke="#ff0000" stroke-width="1.1" fill="none" stroke-linejoin="miter"/>
<polygon points="1102.5,489.5 1121.5,489.5 1131.5,494.5 1121.5,499.5 1102.5,499.5" stroke="#ff0000" stroke-width="1.1" fill="none" stroke-linejoin="miter"/>
<polygon points="1102.5,508.5 1121.5,508.5 1131.5,513.5 1121.5,517.5 1102.5,517.5" stroke="#ff0000" stroke-width="1.1" fill="none" stroke-linejoin="miter"/>
<polygon points="1102.5,517.5 1121.5,517.5 1131.5,522.5 1121.5,527.5 1102.5,527.5" stroke="#ff0000" stroke-width="1.1" fill="none" stroke-linejoin="miter"/>
<line x1="1017.5" y1="370.5" x2="1045" y2="370.5" stroke="#ff0000" stroke-width="1"/>
<line x1="1045" y1="370.5" x2="1102" y2="370.5" stroke="#800040" stroke-width="1"/>
<line x1="1017.5" y1="380.5" x2="1045" y2="380.5" stroke="#ff0000" stroke-width="1"/>
<line x1="1045" y1="380.5" x2="1102" y2="380.5" stroke="#800040" stroke-width="1"/>
<polygon points="1103,370.5 1112,365.5 1131,365.5 1131,375.5 1112,375.5" stroke="#ff0000" stroke-width="1.1" fill="none" stroke-linejoin="miter"/>
<polygon points="1103,380.5 1112,375.5 1131,375.5 1131,385.5 1112,385.5" stroke="#ff0000" stroke-width="1.1" fill="none" stroke-linejoin="miter"/>
<line x1="1017.5" y1="551.5" x2="1045" y2="551.5" stroke="#ff0000" stroke-width="1"/>
<line x1="1045" y1="551.5" x2="1188.5" y2="551.5" stroke="#800040" stroke-width="1"/>
<line x1="1188.5" y1="551.5" x2="1197.5" y2="551.5" stroke="#ff0000" stroke-width="1"/>
<polyline points="1197.5,551.5 1200.3,548.5 1205.9,554.5 1211.5,548.5 1217.1,554.5 1222.7,548.5 1225.5,551.5" stroke="#0000ff" stroke-width="1.3" fill="none" stroke-linejoin="miter"/>
<line x1="1225.5" y1="551.5" x2="1234.5" y2="551.5" stroke="#ff0000" stroke-width="1"/>
<line x1="1235" y1="551.5" x2="1330.5" y2="551.5" stroke="#800040" stroke-width="1"/>
<line x1="1017.5" y1="560.5" x2="1045" y2="560.5" stroke="#ff0000" stroke-width="1"/>
<line x1="1045" y1="560.5" x2="1188.5" y2="560.5" stroke="#800040" stroke-width="1"/>
<line x1="1188.5" y1="560.5" x2="1197.5" y2="560.5" stroke="#ff0000" stroke-width="1"/>
<polyline points="1197.5,560.5 1200.3,557.5 1205.9,563.5 1211.5,557.5 1217.1,563.5 1222.7,557.5 1225.5,560.5" stroke="#0000ff" stroke-width="1.3" fill="none" stroke-linejoin="miter"/>
<line x1="1225.5" y1="560.5" x2="1234.5" y2="560.5" stroke="#ff0000" stroke-width="1"/>
<line x1="1235" y1="560.5" x2="1330.5" y2="560.5" stroke="#800040" stroke-width="1"/>
<line x1="1017.5" y1="570.5" x2="1045" y2="570.5" stroke="#ff0000" stroke-width="1"/>
<line x1="1045" y1="570.5" x2="1188.5" y2="570.5" stroke="#800040" stroke-width="1"/>
<line x1="1188.5" y1="570.5" x2="1197.5" y2="570.5" stroke="#ff0000" stroke-width="1"/>
<polyline points="1197.5,570.5 1200.3,567.5 1205.9,573.5 1211.5,567.5 1217.1,573.5 1222.7,567.5 1225.5,570.5" stroke="#0000ff" stroke-width="1.3" fill="none" stroke-linejoin="miter"/>
<line x1="1225.5" y1="570.5" x2="1234.5" y2="570.5" stroke="#ff0000" stroke-width="1"/>
<line x1="1235" y1="570.5" x2="1330.5" y2="570.5" stroke="#800040" stroke-width="1"/>
<line x1="1017.5" y1="579.5" x2="1045" y2="579.5" stroke="#ff0000" stroke-width="1"/>
<line x1="1045" y1="579.5" x2="1188.5" y2="579.5" stroke="#800040" stroke-width="1"/>
<line x1="1188.5" y1="579.5" x2="1197.5" y2="579.5" stroke="#ff0000" stroke-width="1"/>
<polyline points="1197.5,579.5 1200.3,576.5 1205.9,582.5 1211.5,576.5 1217.1,582.5 1222.7,576.5 1225.5,579.5" stroke="#0000ff" stroke-width="1.3" fill="none" stroke-linejoin="miter"/>
<line x1="1225.5" y1="579.5" x2="1234.5" y2="579.5" stroke="#ff0000" stroke-width="1"/>
<line x1="1235" y1="579.5" x2="1330.5" y2="579.5" stroke="#800040" stroke-width="1"/>
<polygon points="1330.5,551.5 1339.5,546.5 1358.5,546.5 1358.5,555.5 1339.5,555.5" stroke="#ff0000" stroke-width="1.1" fill="none" stroke-linejoin="miter"/>
<polygon points="1330.5,560.5 1339.5,555.5 1358.5,555.5 1358.5,565.5 1339.5,565.5" stroke="#ff0000" stroke-width="1.1" fill="none" stroke-linejoin="miter"/>
<polygon points="1330.5,565.5 1349.5,565.5 1359.5,570.5 1349.5,574.5 1330.5,574.5" stroke="#ff0000" stroke-width="1.1" fill="none" stroke-linejoin="miter"/>
<polygon points="1330.5,574.5 1349.5,574.5 1359.5,579.5 1349.5,584.5 1330.5,584.5" stroke="#ff0000" stroke-width="1.1" fill="none" stroke-linejoin="miter"/>
<line x1="1017.5" y1="589.5" x2="1045" y2="589.5" stroke="#ff0000" stroke-width="1"/>
<line x1="1045" y1="589.5" x2="1188" y2="589.5" stroke="#800040" stroke-width="1"/>
<line x1="1017.5" y1="627.5" x2="1045" y2="627.5" stroke="#ff0000" stroke-width="1"/>
<line x1="1045" y1="627.5" x2="1083.5" y2="627.5" stroke="#800040" stroke-width="1"/>
<line x1="1083.5" y1="608.5" x2="1083.5" y2="628" stroke="#800040" stroke-width="1"/>
<line x1="1083" y1="608.5" x2="1188.5" y2="608.5" stroke="#800040" stroke-width="1"/>
<line x1="1188.5" y1="608.5" x2="1197.5" y2="608.5" stroke="#ff0000" stroke-width="1"/>
<polyline points="1197.5,608.5 1200.3,605.5 1205.9,611.5 1211.5,605.5 1217.1,611.5 1222.7,605.5 1225.5,608.5" stroke="#0000ff" stroke-width="1.3" fill="none" stroke-linejoin="miter"/>
<line x1="1225.5" y1="608.5" x2="1234.5" y2="608.5" stroke="#ff0000" stroke-width="1"/>
<line x1="1235" y1="608.5" x2="1330.5" y2="608.5" stroke="#800040" stroke-width="1"/>
<polygon points="1330.5,603.5 1349.5,603.5 1359.5,608.5 1349.5,613.5 1330.5,613.5" stroke="#ff0000" stroke-width="1.1" fill="none" stroke-linejoin="miter"/>
<line x1="1093" y1="627.5" x2="1188.5" y2="627.5" stroke="#800040" stroke-width="1"/>
<line x1="1188.5" y1="627.5" x2="1197.5" y2="627.5" stroke="#ff0000" stroke-width="1"/>
<polyline points="1197.5,627.5 1200.3,624.5 1205.9,630.5 1211.5,624.5 1217.1,630.5 1222.7,624.5 1225.5,627.5" stroke="#0000ff" stroke-width="1.3" fill="none" stroke-linejoin="miter"/>
<line x1="1225.5" y1="627.5" x2="1234.5" y2="627.5" stroke="#ff0000" stroke-width="1"/>
<line x1="1235" y1="627.5" x2="1330.5" y2="627.5" stroke="#800040" stroke-width="1"/>
<line x1="1093" y1="636.5" x2="1188.5" y2="636.5" stroke="#800040" stroke-width="1"/>
<line x1="1188.5" y1="636.5" x2="1197.5" y2="636.5" stroke="#ff0000" stroke-width="1"/>
<polyline points="1197.5,636.5 1200.3,633.5 1205.9,639.5 1211.5,633.5 1217.1,639.5 1222.7,633.5 1225.5,636.5" stroke="#0000ff" stroke-width="1.3" fill="none" stroke-linejoin="miter"/>
<line x1="1225.5" y1="636.5" x2="1234.5" y2="636.5" stroke="#ff0000" stroke-width="1"/>
<line x1="1235" y1="636.5" x2="1330.5" y2="636.5" stroke="#800040" stroke-width="1"/>
<line x1="1093" y1="646.5" x2="1188.5" y2="646.5" stroke="#800040" stroke-width="1"/>
<line x1="1188.5" y1="646.5" x2="1197.5" y2="646.5" stroke="#ff0000" stroke-width="1"/>
<polyline points="1197.5,646.5 1200.3,643.5 1205.9,649.5 1211.5,643.5 1217.1,649.5 1222.7,643.5 1225.5,646.5" stroke="#0000ff" stroke-width="1.3" fill="none" stroke-linejoin="miter"/>
<line x1="1225.5" y1="646.5" x2="1234.5" y2="646.5" stroke="#ff0000" stroke-width="1"/>
<line x1="1235" y1="646.5" x2="1330.5" y2="646.5" stroke="#800040" stroke-width="1"/>
<line x1="1093" y1="655.5" x2="1188.5" y2="655.5" stroke="#800040" stroke-width="1"/>
<line x1="1188.5" y1="655.5" x2="1197.5" y2="655.5" stroke="#ff0000" stroke-width="1"/>
<polyline points="1197.5,655.5 1200.3,652.5 1205.9,658.5 1211.5,652.5 1217.1,658.5 1222.7,652.5 1225.5,655.5" stroke="#0000ff" stroke-width="1.3" fill="none" stroke-linejoin="miter"/>
<line x1="1225.5" y1="655.5" x2="1234.5" y2="655.5" stroke="#ff0000" stroke-width="1"/>
<line x1="1235" y1="655.5" x2="1330.5" y2="655.5" stroke="#800040" stroke-width="1"/>
<line x1="1093" y1="665.5" x2="1188.5" y2="665.5" stroke="#800040" stroke-width="1"/>
<line x1="1188.5" y1="665.5" x2="1197.5" y2="665.5" stroke="#ff0000" stroke-width="1"/>
<polyline points="1197.5,665.5 1200.3,662.5 1205.9,668.5 1211.5,662.5 1217.1,668.5 1222.7,662.5 1225.5,665.5" stroke="#0000ff" stroke-width="1.3" fill="none" stroke-linejoin="miter"/>
<line x1="1225.5" y1="665.5" x2="1234.5" y2="665.5" stroke="#ff0000" stroke-width="1"/>
<line x1="1235" y1="665.5" x2="1330.5" y2="665.5" stroke="#800040" stroke-width="1"/>
<line x1="1017.5" y1="646.5" x2="1045" y2="646.5" stroke="#ff0000" stroke-width="1"/>
<line x1="1045" y1="646.5" x2="1093" y2="646.5" stroke="#800040" stroke-width="1"/>
<line x1="1017.5" y1="665.5" x2="1045" y2="665.5" stroke="#ff0000" stroke-width="1"/>
<line x1="1045" y1="665.5" x2="1093" y2="665.5" stroke="#800040" stroke-width="1"/>
<line x1="1093.5" y1="627.5" x2="1093.5" y2="646.5" stroke="#800040" stroke-width="1"/>
<line x1="1093.5" y1="655.5" x2="1093.5" y2="665.5" stroke="#800040" stroke-width="1"/>
<circle cx="1093.5" cy="636.5" r="2.15" fill="#ff00ff"/>
<circle cx="1093.5" cy="646.5" r="2.15" fill="#ff00ff"/>
<circle cx="1093.5" cy="665.5" r="2.15" fill="#ff00ff"/>
<polygon points="1330.5,622.5 1349.5,622.5 1359.5,627.5 1349.5,631.5 1330.5,631.5" stroke="#ff0000" stroke-width="1.1" fill="none" stroke-linejoin="miter"/>
<polygon points="1330.5,631.5 1349.5,631.5 1359.5,636.5 1349.5,641.5 1330.5,641.5" stroke="#ff0000" stroke-width="1.1" fill="none" stroke-linejoin="miter"/>
<polygon points="1330.5,660.5 1349.5,660.5 1359.5,665.5 1349.5,670.5 1330.5,670.5" stroke="#ff0000" stroke-width="1.1" fill="none" stroke-linejoin="miter"/>
<polygon points="1188.5,33.8 1207.5,33.8 1217.5,38.5 1207.5,42.5 1188.5,42.5" stroke="#ff0000" stroke-width="1.1" fill="none" stroke-linejoin="miter"/>
<polygon points="1188.5,42.5 1207.5,42.5 1217.5,47.5 1207.5,52.2 1188.5,52.2" stroke="#ff0000" stroke-width="1.1" fill="none" stroke-linejoin="miter"/>
<line x1="1216" y1="38.5" x2="1255" y2="38.5" stroke="#800040" stroke-width="1"/>
<line x1="1216" y1="47.5" x2="1255" y2="47.5" stroke="#800040" stroke-width="1"/>
<rect x="1226.5" y="193.5" width="38" height="21" stroke="#0000ff" stroke-width="1" fill="none"/>
<line x1="1217" y1="199.5" x2="1226.5" y2="199.5" stroke="#ff0000" stroke-width="1"/>
<line x1="1264.5" y1="199.5" x2="1273" y2="199.5" stroke="#ff0000" stroke-width="1"/>
<polyline points="1227,199.5 1230.7,196.5 1238.1,202.5 1245.5,196.5 1252.9,202.5 1260.3,196.5 1264,199.5" stroke="#0000ff" stroke-width="1.3" fill="none" stroke-linejoin="miter"/>
<line x1="1217" y1="209.5" x2="1226.5" y2="209.5" stroke="#ff0000" stroke-width="1"/>
<line x1="1264.5" y1="209.5" x2="1273" y2="209.5" stroke="#ff0000" stroke-width="1"/>
<polyline points="1227,209.5 1230.7,206.5 1238.1,212.5 1245.5,206.5 1252.9,212.5 1260.3,206.5 1264,209.5" stroke="#0000ff" stroke-width="1.3" fill="none" stroke-linejoin="miter"/>
<rect x="1226.5" y="222.5" width="38" height="21" stroke="#0000ff" stroke-width="1" fill="none"/>
<line x1="1217" y1="228.5" x2="1226.5" y2="228.5" stroke="#ff0000" stroke-width="1"/>
<line x1="1264.5" y1="228.5" x2="1273" y2="228.5" stroke="#ff0000" stroke-width="1"/>
<polyline points="1227,228.5 1230.7,225.5 1238.1,231.5 1245.5,225.5 1252.9,231.5 1260.3,225.5 1264,228.5" stroke="#0000ff" stroke-width="1.3" fill="none" stroke-linejoin="miter"/>
<line x1="1217" y1="237.5" x2="1226.5" y2="237.5" stroke="#ff0000" stroke-width="1"/>
<line x1="1264.5" y1="237.5" x2="1273" y2="237.5" stroke="#ff0000" stroke-width="1"/>
<polyline points="1227,237.5 1230.7,234.5 1238.1,240.5 1245.5,234.5 1252.9,240.5 1260.3,234.5 1264,237.5" stroke="#0000ff" stroke-width="1.3" fill="none" stroke-linejoin="miter"/>
<rect x="1226.5" y="260.5" width="38" height="21" stroke="#0000ff" stroke-width="1" fill="none"/>
<line x1="1217" y1="266.5" x2="1226.5" y2="266.5" stroke="#ff0000" stroke-width="1"/>
<line x1="1264.5" y1="266.5" x2="1273" y2="266.5" stroke="#ff0000" stroke-width="1"/>
<polyline points="1227,266.5 1230.7,263.5 1238.1,269.5 1245.5,263.5 1252.9,269.5 1260.3,263.5 1264,266.5" stroke="#0000ff" stroke-width="1.3" fill="none" stroke-linejoin="miter"/>
<line x1="1217" y1="275.5" x2="1226.5" y2="275.5" stroke="#ff0000" stroke-width="1"/>
<line x1="1264.5" y1="275.5" x2="1273" y2="275.5" stroke="#ff0000" stroke-width="1"/>
<polyline points="1227,275.5 1230.7,272.5 1238.1,278.5 1245.5,272.5 1252.9,278.5 1260.3,272.5 1264,275.5" stroke="#0000ff" stroke-width="1.3" fill="none" stroke-linejoin="miter"/>
<line x1="1273" y1="199.5" x2="1330.5" y2="199.5" stroke="#800040" stroke-width="1"/>
<line x1="1273" y1="209.5" x2="1330.5" y2="209.5" stroke="#800040" stroke-width="1"/>
<line x1="1273" y1="228.5" x2="1330.5" y2="228.5" stroke="#800040" stroke-width="1"/>
<line x1="1273" y1="237.5" x2="1330.5" y2="237.5" stroke="#800040" stroke-width="1"/>
<polygon points="1330.5,194.5 1349.5,194.5 1359.5,199.5 1349.5,204.5 1330.5,204.5" stroke="#ff0000" stroke-width="1.1" fill="none" stroke-linejoin="miter"/>
<polygon points="1330.5,204.5 1349.5,204.5 1359.5,209.5 1349.5,214.5 1330.5,214.5" stroke="#ff0000" stroke-width="1.1" fill="none" stroke-linejoin="miter"/>
<polygon points="1330.5,223.5 1349.5,223.5 1359.5,228.5 1349.5,232.5 1330.5,232.5" stroke="#ff0000" stroke-width="1.1" fill="none" stroke-linejoin="miter"/>
<polygon points="1330.5,232.5 1349.5,232.5 1359.5,237.5 1349.5,242.5 1330.5,242.5" stroke="#ff0000" stroke-width="1.1" fill="none" stroke-linejoin="miter"/>
<line x1="1178" y1="266.5" x2="1217" y2="266.5" stroke="#800040" stroke-width="1"/>
<line x1="1273" y1="266.5" x2="1330.5" y2="266.5" stroke="#800040" stroke-width="1"/>
<line x1="1169" y1="275.5" x2="1217" y2="275.5" stroke="#800040" stroke-width="1"/>
<line x1="1273" y1="275.5" x2="1330.5" y2="275.5" stroke="#800040" stroke-width="1"/>
<polygon points="1330.5,261.5 1349.5,261.5 1359.5,266.5 1349.5,270.5 1330.5,270.5" stroke="#ff0000" stroke-width="1.1" fill="none" stroke-linejoin="miter"/>
<polygon points="1330.5,270.5 1349.5,270.5 1359.5,275.5 1349.5,280.5 1330.5,280.5" stroke="#ff0000" stroke-width="1.1" fill="none" stroke-linejoin="miter"/>
<line x1="1178.5" y1="228.5" x2="1178.5" y2="267" stroke="#800040" stroke-width="1"/>
<line x1="1169.5" y1="237.5" x2="1169.5" y2="276" stroke="#800040" stroke-width="1"/>
<circle cx="1178.5" cy="228.5" r="2.15" fill="#ff00ff"/>
<circle cx="1169.5" cy="237.5" r="2.15" fill="#ff00ff"/>
<line x1="1254" y1="361.5" x2="1360" y2="361.5" stroke="#800040" stroke-width="1"/>
<line x1="1254" y1="370.5" x2="1360" y2="370.5" stroke="#800040" stroke-width="1"/>
<rect x="1368.5" y="355.5" width="38" height="21" stroke="#0000ff" stroke-width="1" fill="none"/>
<line x1="1359" y1="361.5" x2="1368.5" y2="361.5" stroke="#ff0000" stroke-width="1"/>
<line x1="1406.5" y1="361.5" x2="1415" y2="361.5" stroke="#ff0000" stroke-width="1"/>
<polyline points="1369,361.5 1372.7,358.5 1380.1,364.5 1387.5,358.5 1394.9,364.5 1402.3,358.5 1406,361.5" stroke="#0000ff" stroke-width="1.3" fill="none" stroke-linejoin="miter"/>
<line x1="1359" y1="370.5" x2="1368.5" y2="370.5" stroke="#ff0000" stroke-width="1"/>
<line x1="1406.5" y1="370.5" x2="1415" y2="370.5" stroke="#ff0000" stroke-width="1"/>
<polyline points="1369,370.5 1372.7,367.5 1380.1,373.5 1387.5,367.5 1394.9,373.5 1402.3,367.5 1406,370.5" stroke="#0000ff" stroke-width="1.3" fill="none" stroke-linejoin="miter"/>
<rect x="1368.5" y="393.5" width="38" height="21" stroke="#0000ff" stroke-width="1" fill="none"/>
<line x1="1359" y1="399.5" x2="1368.5" y2="399.5" stroke="#ff0000" stroke-width="1"/>
<line x1="1406.5" y1="399.5" x2="1415" y2="399.5" stroke="#ff0000" stroke-width="1"/>
<polyline points="1369,399.5 1372.7,396.5 1380.1,402.5 1387.5,396.5 1394.9,402.5 1402.3,396.5 1406,399.5" stroke="#0000ff" stroke-width="1.3" fill="none" stroke-linejoin="miter"/>
<line x1="1359" y1="408.5" x2="1368.5" y2="408.5" stroke="#ff0000" stroke-width="1"/>
<line x1="1406.5" y1="408.5" x2="1415" y2="408.5" stroke="#ff0000" stroke-width="1"/>
<polyline points="1369,408.5 1372.7,405.5 1380.1,411.5 1387.5,405.5 1394.9,411.5 1402.3,405.5 1406,408.5" stroke="#0000ff" stroke-width="1.3" fill="none" stroke-linejoin="miter"/>
<line x1="1321" y1="399.5" x2="1360" y2="399.5" stroke="#800040" stroke-width="1"/>
<line x1="1311" y1="408.5" x2="1360" y2="408.5" stroke="#800040" stroke-width="1"/>
<line x1="1321.5" y1="361.5" x2="1321.5" y2="400" stroke="#800040" stroke-width="1"/>
<line x1="1311.5" y1="370.5" x2="1311.5" y2="409" stroke="#800040" stroke-width="1"/>
<circle cx="1321.5" cy="361.5" r="2.15" fill="#ff00ff"/>
<circle cx="1311.5" cy="370.5" r="2.15" fill="#ff00ff"/>
<line x1="1415" y1="361.5" x2="1473.5" y2="361.5" stroke="#800040" stroke-width="1"/>
<line x1="1415" y1="370.5" x2="1473.5" y2="370.5" stroke="#800040" stroke-width="1"/>
<line x1="1415" y1="399.5" x2="1473.5" y2="399.5" stroke="#800040" stroke-width="1"/>
<line x1="1415" y1="408.5" x2="1473.5" y2="408.5" stroke="#800040" stroke-width="1"/>
<polygon points="1473.5,356.5 1492.5,356.5 1502.5,361.5 1492.5,365.5 1473.5,365.5" stroke="#ff0000" stroke-width="1.1" fill="none" stroke-linejoin="miter"/>
<polygon points="1473.5,365.5 1492.5,365.5 1502.5,370.5 1492.5,375.5 1473.5,375.5" stroke="#ff0000" stroke-width="1.1" fill="none" stroke-linejoin="miter"/>
<polygon points="1473.5,394.5 1492.5,394.5 1502.5,399.5 1492.5,403.5 1473.5,403.5" stroke="#ff0000" stroke-width="1.1" fill="none" stroke-linejoin="miter"/>
<polygon points="1473.5,403.5 1492.5,403.5 1502.5,408.5 1492.5,413.5 1473.5,413.5" stroke="#ff0000" stroke-width="1.1" fill="none" stroke-linejoin="miter"/>
<rect x="67.5" y="371.5" width="123" height="312" stroke="#000000" stroke-width="1.2" fill="none" stroke-dasharray="6 5.6" stroke-dashoffset="0"/>
<rect x="67.5" y="694.5" width="114" height="218" stroke="#000000" stroke-width="1.2" fill="none" stroke-dasharray="6 5.6" stroke-dashoffset="0"/>
<rect x="67.5" y="922.5" width="114" height="198" stroke="#000000" stroke-width="1.2" fill="none" stroke-dasharray="6 5.6" stroke-dashoffset="0"/>
<circle cx="95.5" cy="392.5" r="3" stroke="#ff0000" stroke-width="1" fill="none"/>
<line x1="95.5" y1="395.5" x2="95.5" y2="398.5" stroke="#ff0000" stroke-width="1"/>
<line x1="95.5" y1="398.5" x2="95.5" y2="418.5" stroke="#800040" stroke-width="1"/>
<line x1="95.5" y1="418.5" x2="95.5" y2="428" stroke="#ff0000" stroke-width="1"/>
<polyline points="95.5,428 98.5,430.75 92.5,436.25 98.5,441.75 92.5,447.25 98.5,452.75 95.5,455.5" stroke="#0000ff" stroke-width="1.3" fill="none" stroke-linejoin="miter"/>
<line x1="95.5" y1="455.5" x2="95.5" y2="465" stroke="#ff0000" stroke-width="1"/>
<line x1="95.5" y1="465" x2="95.5" y2="485" stroke="#800040" stroke-width="1"/>
<line x1="95" y1="484.5" x2="181" y2="484.5" stroke="#800040" stroke-width="1"/>
<circle cx="114.5" cy="715.5" r="3" stroke="#ff0000" stroke-width="1" fill="none"/>
<line x1="114.5" y1="718.5" x2="114.5" y2="721.5" stroke="#ff0000" stroke-width="1"/>
<line x1="114.5" y1="721.5" x2="114.5" y2="742" stroke="#800040" stroke-width="1"/>
<line x1="114.5" y1="741.6" x2="114.5" y2="750.9" stroke="#ff0000" stroke-width="1"/>
<polyline points="114.5,750.9 117.5,753.71 111.5,759.33 117.5,764.95 111.5,770.57 117.5,776.19 114.5,779" stroke="#0000ff" stroke-width="1.3" fill="none" stroke-linejoin="miter"/>
<line x1="114.5" y1="779" x2="114.5" y2="788.3" stroke="#ff0000" stroke-width="1"/>
<line x1="114.5" y1="788" x2="114.5" y2="808.5" stroke="#800040" stroke-width="1"/>
<circle cx="114.5" cy="798.5" r="2.15" fill="#ff00ff"/>
<line x1="114" y1="798.5" x2="171.5" y2="798.5" stroke="#800040" stroke-width="1"/>
<line x1="114.5" y1="808.2" x2="114.5" y2="817.5" stroke="#ff0000" stroke-width="1"/>
<polyline points="114.5,817.5 117.5,820.31 111.5,825.93 117.5,831.55 111.5,837.17 117.5,842.79 114.5,845.6" stroke="#0000ff" stroke-width="1.3" fill="none" stroke-linejoin="miter"/>
<line x1="114.5" y1="845.6" x2="114.5" y2="854.9" stroke="#ff0000" stroke-width="1"/>
<line x1="114.5" y1="855" x2="114.5" y2="864.5" stroke="#800040" stroke-width="1"/>
<line x1="104.5" y1="864.5" x2="124.5" y2="864.5" stroke="#ff0000" stroke-width="1"/>
<line x1="107.5" y1="867.45" x2="121.5" y2="867.45" stroke="#ff0000" stroke-width="1"/>
<line x1="110.3" y1="870.4" x2="118.7" y2="870.4" stroke="#ff0000" stroke-width="1"/>
<line x1="113.1" y1="873.35" x2="115.9" y2="873.35" stroke="#ff0000" stroke-width="1"/>
<circle cx="95.5" cy="943.5" r="3" stroke="#ff0000" stroke-width="1" fill="none"/>
<line x1="95.5" y1="946.5" x2="95.5" y2="949.5" stroke="#ff0000" stroke-width="1"/>
<line x1="95.5" y1="949.5" x2="95.5" y2="960.5" stroke="#800040" stroke-width="1"/>
<line x1="95.5" y1="960" x2="95.5" y2="969.3" stroke="#ff0000" stroke-width="1"/>
<polyline points="95.5,969.3 92.5,972.15 98.5,977.85 92.5,983.55 98.5,989.25 92.5,994.95 95.5,997.8" stroke="#0000ff" stroke-width="1.3" fill="none" stroke-linejoin="miter"/>
<line x1="95.5" y1="997.8" x2="95.5" y2="1007.1" stroke="#ff0000" stroke-width="1"/>
<line x1="95.5" y1="1006.5" x2="95.5" y2="1036.5" stroke="#800040" stroke-width="1"/>
<circle cx="95.5" cy="1026.5" r="2.15" fill="#ff00ff"/>
<line x1="95" y1="1026.5" x2="162" y2="1026.5" stroke="#800040" stroke-width="1"/>
<line x1="95.5" y1="1036.1" x2="95.5" y2="1045.4" stroke="#ff0000" stroke-width="1"/>
<polyline points="95.5,1045.4 92.5,1048.21 98.5,1053.83 92.5,1059.45 98.5,1065.07 92.5,1070.69 95.5,1073.5" stroke="#0000ff" stroke-width="1.3" fill="none" stroke-linejoin="miter"/>
<line x1="95.5" y1="1073.5" x2="95.5" y2="1082.8" stroke="#ff0000" stroke-width="1"/>
<line x1="95.5" y1="1082.5" x2="95.5" y2="1093" stroke="#800040" stroke-width="1"/>
<line x1="85.5" y1="1093" x2="105.5" y2="1093" stroke="#ff0000" stroke-width="1"/>
<line x1="88.5" y1="1095.95" x2="102.5" y2="1095.95" stroke="#ff0000" stroke-width="1"/>
<line x1="91.3" y1="1098.9" x2="99.7" y2="1098.9" stroke="#ff0000" stroke-width="1"/>
<line x1="94.1" y1="1101.85" x2="96.9" y2="1101.85" stroke="#ff0000" stroke-width="1"/>
<line x1="237" y1="1007.5" x2="305" y2="1007.5" stroke="#800040" stroke-width="1"/>
<line x1="237.5" y1="1007.5" x2="237.5" y2="1036.5" stroke="#800040" stroke-width="1"/>
<line x1="237.5" y1="1036.1" x2="237.5" y2="1045.4" stroke="#ff0000" stroke-width="1"/>
<polyline points="237.5,1045.4 234.5,1048.21 240.5,1053.83 234.5,1059.45 240.5,1065.07 234.5,1070.69 237.5,1073.5" stroke="#0000ff" stroke-width="1.3" fill="none" stroke-linejoin="miter"/>
<line x1="237.5" y1="1073.5" x2="237.5" y2="1082.8" stroke="#ff0000" stroke-width="1"/>
<line x1="237.5" y1="1082.5" x2="237.5" y2="1102.5" stroke="#800040" stroke-width="1"/>
<line x1="227.5" y1="1102.5" x2="247.5" y2="1102.5" stroke="#ff0000" stroke-width="1"/>
<line x1="230.5" y1="1105.45" x2="244.5" y2="1105.45" stroke="#ff0000" stroke-width="1"/>
<line x1="233.3" y1="1108.4" x2="241.7" y2="1108.4" stroke="#ff0000" stroke-width="1"/>
<line x1="236.1" y1="1111.35" x2="238.9" y2="1111.35" stroke="#ff0000" stroke-width="1"/>
<circle cx="380.5" cy="383" r="3" stroke="#ff0000" stroke-width="1" fill="none"/>
<line x1="380.5" y1="386" x2="380.5" y2="389" stroke="#ff0000" stroke-width="1"/>
<line x1="380.5" y1="389" x2="380.5" y2="437.5" stroke="#800040" stroke-width="1"/>
<circle cx="380.5" cy="399.5" r="2.15" fill="#ff00ff"/>
<line x1="380" y1="399.5" x2="447.5" y2="399.5" stroke="#800040" stroke-width="1"/>
<circle cx="427.5" cy="399.5" r="2.15" fill="#ff00ff"/>
<line x1="427.5" y1="399.5" x2="427.5" y2="409.5" stroke="#800040" stroke-width="1"/>
<line x1="427.5" y1="409.5" x2="427.5" y2="418" stroke="#ff0000" stroke-width="1"/>
<polyline points="427.5,418 430.5,420.8 424.5,426.4 430.5,432 424.5,437.6 430.5,443.2 427.5,446" stroke="#0000ff" stroke-width="1.3" fill="none" stroke-linejoin="miter"/>
<line x1="427.5" y1="446" x2="427.5" y2="454.5" stroke="#ff0000" stroke-width="1"/>
<line x1="446.5" y1="399.5" x2="446.5" y2="409.5" stroke="#800040" stroke-width="1"/>
<line x1="446.5" y1="409.5" x2="446.5" y2="418" stroke="#ff0000" stroke-width="1"/>
<polyline points="446.5,418 449.5,420.8 443.5,426.4 449.5,432 443.5,437.6 449.5,443.2 446.5,446" stroke="#0000ff" stroke-width="1.3" fill="none" stroke-linejoin="miter"/>
<line x1="446.5" y1="446" x2="446.5" y2="454.5" stroke="#ff0000" stroke-width="1"/>
<line x1="427.5" y1="454.5" x2="427.5" y2="465.5" stroke="#800040" stroke-width="1"/>
<line x1="446.5" y1="454.5" x2="446.5" y2="560.5" stroke="#800040" stroke-width="1"/>
<circle cx="427.5" cy="465.5" r="2.15" fill="#ff00ff"/>
<circle cx="446.5" cy="560.5" r="2.15" fill="#ff00ff"/>
<circle cx="380.5" cy="465.5" r="19.2" stroke="#0000ff" stroke-width="1.1" fill="none"/>
<line x1="367" y1="456.8" x2="394" y2="456.8" stroke="#0000ff" stroke-width="2"/>
<line x1="380.5" y1="446.3" x2="380.5" y2="456.8" stroke="#0000ff" stroke-width="1"/>
<line x1="368.9" y1="460.5" x2="374.1" y2="460.5" stroke="#0000ff" stroke-width="1"/>
<line x1="371.5" y1="460.5" x2="371.5" y2="475.5" stroke="#0000ff" stroke-width="1"/>
<line x1="386.9" y1="460.5" x2="392.1" y2="460.5" stroke="#0000ff" stroke-width="1"/>
<line x1="389.5" y1="460.5" x2="389.5" y2="475.5" stroke="#0000ff" stroke-width="1"/>
<line x1="377.5" y1="460.5" x2="383.5" y2="460.5" stroke="#0000ff" stroke-width="1"/>
<polyline points="377.3,463.7 380.5,461.7 383.7,463.7" stroke="#0000ff" stroke-width="1" fill="none" stroke-linejoin="miter"/>
<line x1="380.5" y1="462" x2="380.5" y2="465.5" stroke="#0000ff" stroke-width="1"/>
<line x1="352.5" y1="465.5" x2="371.5" y2="465.5" stroke="#0000ff" stroke-width="1"/>
<line x1="380.5" y1="465.5" x2="408.5" y2="465.5" stroke="#0000ff" stroke-width="1"/>
<line x1="371.5" y1="475.5" x2="377.5" y2="475.5" stroke="#0000ff" stroke-width="1"/>
<line x1="383" y1="475.5" x2="389.5" y2="475.5" stroke="#0000ff" stroke-width="1"/>
<line x1="377.5" y1="470.3" x2="377.5" y2="480" stroke="#0000ff" stroke-width="1.1"/>
<polygon points="382.8,470.3 382.8,480 377.5,475.2" stroke="#0000ff" stroke-width="1.1" fill="none" stroke-linejoin="miter"/>
<line x1="380.5" y1="437" x2="380.5" y2="446.3" stroke="#ff0000" stroke-width="1"/>
<polygon points="304.5,465.5 313,460.5 323.5,460.5 332.5,465.5 323.5,470.5 313,470.5" stroke="#ff0000" stroke-width="1.1" fill="none" stroke-linejoin="miter"/>
<line x1="332.5" y1="465.5" x2="343" y2="465.5" stroke="#800040" stroke-width="1"/>
<line x1="343" y1="465.5" x2="352.5" y2="465.5" stroke="#ff0000" stroke-width="1"/>
<line x1="408.5" y1="465.5" x2="418" y2="465.5" stroke="#ff0000" stroke-width="1"/>
<line x1="418" y1="465.5" x2="514" y2="465.5" stroke="#800040" stroke-width="1"/>
<circle cx="380.5" cy="560.5" r="19.2" stroke="#0000ff" stroke-width="1.1" fill="none"/>
<line x1="367" y1="551.8" x2="394" y2="551.8" stroke="#0000ff" stroke-width="2"/>
<line x1="380.5" y1="541.3" x2="380.5" y2="551.8" stroke="#0000ff" stroke-width="1"/>
<line x1="368.9" y1="555.5" x2="374.1" y2="555.5" stroke="#0000ff" stroke-width="1"/>
<line x1="371.5" y1="555.5" x2="371.5" y2="570.5" stroke="#0000ff" stroke-width="1"/>
<line x1="386.9" y1="555.5" x2="392.1" y2="555.5" stroke="#0000ff" stroke-width="1"/>
<line x1="389.5" y1="555.5" x2="389.5" y2="570.5" stroke="#0000ff" stroke-width="1"/>
<line x1="377.5" y1="555.5" x2="383.5" y2="555.5" stroke="#0000ff" stroke-width="1"/>
<polyline points="377.3,558.7 380.5,556.7 383.7,558.7" stroke="#0000ff" stroke-width="1" fill="none" stroke-linejoin="miter"/>
<line x1="380.5" y1="557" x2="380.5" y2="560.5" stroke="#0000ff" stroke-width="1"/>
<line x1="352.5" y1="560.5" x2="371.5" y2="560.5" stroke="#0000ff" stroke-width="1"/>
<line x1="380.5" y1="560.5" x2="408.5" y2="560.5" stroke="#0000ff" stroke-width="1"/>
<line x1="371.5" y1="570.5" x2="377.5" y2="570.5" stroke="#0000ff" stroke-width="1"/>
<line x1="383" y1="570.5" x2="389.5" y2="570.5" stroke="#0000ff" stroke-width="1"/>
<line x1="377.5" y1="565.3" x2="377.5" y2="575" stroke="#0000ff" stroke-width="1.1"/>
<polygon points="382.8,565.3 382.8,575 377.5,570.2" stroke="#0000ff" stroke-width="1.1" fill="none" stroke-linejoin="miter"/>
<line x1="380.5" y1="532" x2="380.5" y2="541.3" stroke="#ff0000" stroke-width="1"/>
<polygon points="304.5,560.5 313,555.5 323.5,555.5 332.5,560.5 323.5,565.5 313,565.5" stroke="#ff0000" stroke-width="1.1" fill="none" stroke-linejoin="miter"/>
<line x1="332.5" y1="560.5" x2="343" y2="560.5" stroke="#800040" stroke-width="1"/>
<line x1="343" y1="560.5" x2="352.5" y2="560.5" stroke="#ff0000" stroke-width="1"/>
<line x1="408.5" y1="560.5" x2="418" y2="560.5" stroke="#ff0000" stroke-width="1"/>
<line x1="418" y1="560.5" x2="514" y2="560.5" stroke="#800040" stroke-width="1"/>
<circle cx="380.5" cy="516" r="3" stroke="#ff0000" stroke-width="1" fill="none"/>
<line x1="380.5" y1="519" x2="380.5" y2="522" stroke="#ff0000" stroke-width="1"/>
<line x1="380.5" y1="522" x2="380.5" y2="531.5" stroke="#800040" stroke-width="1"/>
<line x1="313" y1="627.5" x2="362" y2="627.5" stroke="#800040" stroke-width="1"/>
<line x1="313.5" y1="627.5" x2="313.5" y2="647" stroke="#800040" stroke-width="1"/>
<line x1="362" y1="627.5" x2="370.5" y2="627.5" stroke="#ff0000" stroke-width="1"/>
<line x1="370.5" y1="622" x2="370.5" y2="633" stroke="#0000ff" stroke-width="1.2"/>
<rect x="374.5" y="617.5" width="12" height="19" stroke="#0000ff" stroke-width="1.2" fill="none"/>
<line x1="389.5" y1="622" x2="389.5" y2="633" stroke="#0000ff" stroke-width="1.2"/>
<line x1="389.5" y1="627.5" x2="399" y2="627.5" stroke="#ff0000" stroke-width="1"/>
<line x1="399" y1="627.5" x2="523" y2="627.5" stroke="#800040" stroke-width="1"/>
<circle cx="446.5" cy="627.5" r="2.15" fill="#ff00ff"/>
<line x1="313.5" y1="646.5" x2="313.5" y2="657" stroke="#ff0000" stroke-width="1"/>
<line x1="304.5" y1="657.5" x2="322.5" y2="657.5" stroke="#0000ff" stroke-width="1.1"/>
<line x1="304.5" y1="662.5" x2="322.5" y2="662.5" stroke="#0000ff" stroke-width="1.1"/>
<line x1="313.5" y1="662.5" x2="313.5" y2="674" stroke="#ff0000" stroke-width="1"/>
<line x1="313.5" y1="674" x2="313.5" y2="693" stroke="#800040" stroke-width="1"/>
<line x1="303.5" y1="693.3" x2="323.5" y2="693.3" stroke="#ff0000" stroke-width="1"/>
<line x1="306.5" y1="696.25" x2="320.5" y2="696.25" stroke="#ff0000" stroke-width="1"/>
<line x1="309.3" y1="699.2" x2="317.7" y2="699.2" stroke="#ff0000" stroke-width="1"/>
<line x1="312.1" y1="702.15" x2="314.9" y2="702.15" stroke="#ff0000" stroke-width="1"/>
<line x1="446.5" y1="627.5" x2="446.5" y2="647" stroke="#800040" stroke-width="1"/>
<line x1="446.5" y1="646.5" x2="446.5" y2="657" stroke="#ff0000" stroke-width="1"/>
<line x1="437.5" y1="657.5" x2="455.5" y2="657.5" stroke="#0000ff" stroke-width="1.1"/>
<line x1="437.5" y1="662.5" x2="455.5" y2="662.5" stroke="#0000ff" stroke-width="1.1"/>
<line x1="446.5" y1="662.5" x2="446.5" y2="674" stroke="#ff0000" stroke-width="1"/>
<line x1="446.5" y1="674" x2="446.5" y2="693" stroke="#800040" stroke-width="1"/>
<line x1="436.5" y1="693.3" x2="456.5" y2="693.3" stroke="#ff0000" stroke-width="1"/>
<line x1="439.5" y1="696.25" x2="453.5" y2="696.25" stroke="#ff0000" stroke-width="1"/>
<line x1="442.3" y1="699.2" x2="450.7" y2="699.2" stroke="#ff0000" stroke-width="1"/>
<line x1="445.1" y1="702.15" x2="447.9" y2="702.15" stroke="#ff0000" stroke-width="1"/>
<rect x="371" y="769.5" width="437" height="114" stroke="#000000" stroke-width="2.6" fill="none"/>
<line x1="456.5" y1="769" x2="456.5" y2="883" stroke="#000000" stroke-width="1.1"/>
<line x1="513.5" y1="769" x2="513.5" y2="883" stroke="#000000" stroke-width="1.1"/>
<line x1="580.5" y1="769" x2="580.5" y2="883" stroke="#000000" stroke-width="1.1"/>
<line x1="694.5" y1="769" x2="694.5" y2="883" stroke="#000000" stroke-width="1.1"/>
<line x1="371" y1="807.5" x2="808" y2="807.5" stroke="#000000" stroke-width="1.1"/>
<line x1="371" y1="845.5" x2="808" y2="845.5" stroke="#000000" stroke-width="1.1"/>
<rect x="988.5" y="912.3" width="228" height="170.4" stroke="#000000" stroke-width="2.6" fill="none"/>
<line x1="1102.5" y1="912" x2="1102.5" y2="1083" stroke="#000000" stroke-width="2.4"/>
<line x1="988" y1="931.2" x2="1216" y2="931.2" stroke="#000000" stroke-width="2.4"/>
<line x1="1026.5" y1="912" x2="1026.5" y2="1083" stroke="#000000" stroke-width="1.1"/>
<line x1="1064.5" y1="912" x2="1064.5" y2="1083" stroke="#000000" stroke-width="1.1"/>
<line x1="1140.5" y1="912" x2="1140.5" y2="1083" stroke="#000000" stroke-width="1.1"/>
<line x1="1178.5" y1="912" x2="1178.5" y2="1083" stroke="#000000" stroke-width="1.1"/>
<line x1="988" y1="950.5" x2="1216" y2="950.5" stroke="#000000" stroke-width="1.1"/>
<line x1="988" y1="969.5" x2="1216" y2="969.5" stroke="#000000" stroke-width="1.1"/>
<line x1="988" y1="988.5" x2="1216" y2="988.5" stroke="#000000" stroke-width="1.1"/>
<line x1="988" y1="1007.5" x2="1216" y2="1007.5" stroke="#000000" stroke-width="1.1"/>
<line x1="988" y1="1026.5" x2="1216" y2="1026.5" stroke="#000000" stroke-width="1.1"/>
<line x1="988" y1="1045.5" x2="1216" y2="1045.5" stroke="#000000" stroke-width="1.1"/>
<line x1="988" y1="1064.5" x2="1216" y2="1064.5" stroke="#000000" stroke-width="1.1"/>
<rect x="361.5" y="903.5" width="875" height="237" stroke="#000000" stroke-width="1.2" fill="none" stroke-dasharray="6 5.6" stroke-dashoffset="0"/>
<ellipse cx="694" cy="1026" rx="161.5" ry="114.5" stroke="#a6a6ff" stroke-width="0.8" fill="none" stroke-dasharray="6 6"/>
<line x1="722.3" y1="931.5" x2="756.7" y2="931.5" stroke="#000000" stroke-width="1.2"/>
<line x1="768.3" y1="931.5" x2="803.2" y2="931.5" stroke="#000000" stroke-width="1.2"/>
<line x1="814.6" y1="931.5" x2="847.1" y2="931.5" stroke="#000000" stroke-width="1.2"/>
<line x1="722.3" y1="1120.5" x2="754" y2="1120.5" stroke="#000000" stroke-width="1.2"/>
<line x1="765.2" y1="1120.5" x2="800" y2="1120.5" stroke="#000000" stroke-width="1.2"/>
<line x1="811.3" y1="1120.5" x2="847.1" y2="1120.5" stroke="#000000" stroke-width="1.2"/>
<line x1="722.5" y1="931" x2="722.5" y2="982.4" stroke="#000000" stroke-width="1.2"/>
<line x1="722.5" y1="993.8" x2="722.5" y2="1028.6" stroke="#000000" stroke-width="1.2"/>
<line x1="722.5" y1="1040.3" x2="722.5" y2="1074.7" stroke="#000000" stroke-width="1.2"/>
<line x1="722.5" y1="1086.5" x2="722.5" y2="1121" stroke="#000000" stroke-width="1.2"/>
<line x1="846.5" y1="931" x2="846.5" y2="962.5" stroke="#000000" stroke-width="1.2"/>
<line x1="846.5" y1="973.9" x2="846.5" y2="1008.7" stroke="#000000" stroke-width="1.2"/>
<line x1="846.5" y1="1020" x2="846.5" y2="1054.8" stroke="#000000" stroke-width="1.2"/>
<line x1="846.5" y1="1066.2" x2="846.5" y2="1101" stroke="#000000" stroke-width="1.2"/>
<line x1="846.5" y1="1111.8" x2="846.5" y2="1121" stroke="#000000" stroke-width="1.2"/>
<polygon points="486.5,945.5 505.5,945.5 515.5,950.5 505.5,955.5 486.5,955.5" stroke="#ff0000" stroke-width="1.1" fill="none" stroke-linejoin="miter"/>
<line x1="515" y1="950.5" x2="763" y2="950.5" stroke="#800040" stroke-width="1"/>
<line x1="762.5" y1="950.5" x2="772" y2="950.5" stroke="#ff0000" stroke-width="1"/>
<polyline points="772,950.5 774.8,947.5 780.4,953.5 786,947.5 791.6,953.5 797.2,947.5 800,950.5" stroke="#0000ff" stroke-width="1.3" fill="none" stroke-linejoin="miter"/>
<line x1="800" y1="950.5" x2="809.5" y2="950.5" stroke="#ff0000" stroke-width="1"/>
<line x1="809.5" y1="950.5" x2="875" y2="950.5" stroke="#800040" stroke-width="1"/>
<polygon points="875,950.5 883.5,945.5 894,945.5 903,950.5 894,955.5 883.5,955.5" stroke="#ff0000" stroke-width="1.1" fill="none" stroke-linejoin="miter"/>
<circle cx="646.5" cy="950.5" r="2.15" fill="#ff00ff"/>
<polygon points="486.5,1002.5 505.5,1002.5 515.5,1007.5 505.5,1012.5 486.5,1012.5" stroke="#ff0000" stroke-width="1.1" fill="none" stroke-linejoin="miter"/>
<line x1="515" y1="1007.5" x2="763" y2="1007.5" stroke="#800040" stroke-width="1"/>
<line x1="762.5" y1="1007.5" x2="772" y2="1007.5" stroke="#ff0000" stroke-width="1"/>
<polyline points="772,1007.5 774.8,1004.5 780.4,1010.5 786,1004.5 791.6,1010.5 797.2,1004.5 800,1007.5" stroke="#0000ff" stroke-width="1.3" fill="none" stroke-linejoin="miter"/>
<line x1="800" y1="1007.5" x2="809.5" y2="1007.5" stroke="#ff0000" stroke-width="1"/>
<line x1="809.5" y1="1007.5" x2="875" y2="1007.5" stroke="#800040" stroke-width="1"/>
<polygon points="875,1007.5 883.5,1002.5 894,1002.5 903,1007.5 894,1012.5 883.5,1012.5" stroke="#ff0000" stroke-width="1.1" fill="none" stroke-linejoin="miter"/>
<circle cx="646.5" cy="1007.5" r="2.15" fill="#ff00ff"/>
<polygon points="486.5,1059.5 505.5,1059.5 515.5,1064.5 505.5,1069.5 486.5,1069.5" stroke="#ff0000" stroke-width="1.1" fill="none" stroke-linejoin="miter"/>
<line x1="515" y1="1064.5" x2="763" y2="1064.5" stroke="#800040" stroke-width="1"/>
<line x1="762.5" y1="1064.5" x2="772" y2="1064.5" stroke="#ff0000" stroke-width="1"/>
<polyline points="772,1064.5 774.8,1061.5 780.4,1067.5 786,1061.5 791.6,1067.5 797.2,1061.5 800,1064.5" stroke="#0000ff" stroke-width="1.3" fill="none" stroke-linejoin="miter"/>
<line x1="800" y1="1064.5" x2="809.5" y2="1064.5" stroke="#ff0000" stroke-width="1"/>
<line x1="809.5" y1="1064.5" x2="875" y2="1064.5" stroke="#800040" stroke-width="1"/>
<polygon points="875,1064.5 883.5,1059.5 894,1059.5 903,1064.5 894,1069.5 883.5,1069.5" stroke="#ff0000" stroke-width="1.1" fill="none" stroke-linejoin="miter"/>
<circle cx="646.5" cy="1064.5" r="2.15" fill="#ff00ff"/>
<line x1="429.6" y1="978.5" x2="429.6" y2="998.5" stroke="#ff0000" stroke-width="1"/>
<line x1="426.8" y1="981.5" x2="426.8" y2="995.5" stroke="#ff0000" stroke-width="1"/>
<line x1="424" y1="984.3" x2="424" y2="992.7" stroke="#ff0000" stroke-width="1"/>
<line x1="421.2" y1="987" x2="421.2" y2="990" stroke="#ff0000" stroke-width="1"/>
<line x1="429.6" y1="988.5" x2="563" y2="988.5" stroke="#800040" stroke-width="1"/>
<line x1="563.2" y1="988.5" x2="572.7" y2="988.5" stroke="#ff0000" stroke-width="1"/>
<polyline points="572.7,988.5 575.47,985.5 581.01,991.5 586.55,985.5 592.09,991.5 597.63,985.5 600.4,988.5" stroke="#0000ff" stroke-width="1.3" fill="none" stroke-linejoin="miter"/>
<line x1="600.4" y1="988.5" x2="609.9" y2="988.5" stroke="#ff0000" stroke-width="1"/>
<line x1="610" y1="988.5" x2="647" y2="988.5" stroke="#800040" stroke-width="1"/>
<line x1="646.5" y1="950.5" x2="646.5" y2="989" stroke="#800040" stroke-width="1"/>
<circle cx="432.5" cy="1045.5" r="3" stroke="#ff0000" stroke-width="1" fill="none"/>
<line x1="435.5" y1="1045.5" x2="438.5" y2="1045.5" stroke="#ff0000" stroke-width="1"/>
<line x1="435.5" y1="1045.5" x2="563" y2="1045.5" stroke="#800040" stroke-width="1"/>
<line x1="563.2" y1="1045.5" x2="572.7" y2="1045.5" stroke="#ff0000" stroke-width="1"/>
<polyline points="572.7,1045.5 575.47,1042.5 581.01,1048.5 586.55,1042.5 592.09,1048.5 597.63,1042.5 600.4,1045.5" stroke="#0000ff" stroke-width="1.3" fill="none" stroke-linejoin="miter"/>
<line x1="600.4" y1="1045.5" x2="609.9" y2="1045.5" stroke="#ff0000" stroke-width="1"/>
<line x1="610" y1="1045.5" x2="647" y2="1045.5" stroke="#800040" stroke-width="1"/>
<line x1="646.5" y1="1007.5" x2="646.5" y2="1046" stroke="#800040" stroke-width="1"/>
<circle cx="432.5" cy="1102.5" r="3" stroke="#ff0000" stroke-width="1" fill="none"/>
<line x1="435.5" y1="1102.5" x2="438.5" y2="1102.5" stroke="#ff0000" stroke-width="1"/>
<line x1="435.5" y1="1102.5" x2="563" y2="1102.5" stroke="#800040" stroke-width="1"/>
<line x1="563.2" y1="1102.5" x2="572.7" y2="1102.5" stroke="#ff0000" stroke-width="1"/>
<polyline points="572.7,1102.5 575.47,1099.5 581.01,1105.5 586.55,1099.5 592.09,1105.5 597.63,1099.5 600.4,1102.5" stroke="#0000ff" stroke-width="1.3" fill="none" stroke-linejoin="miter"/>
<line x1="600.4" y1="1102.5" x2="609.9" y2="1102.5" stroke="#ff0000" stroke-width="1"/>
<line x1="610" y1="1102.5" x2="647" y2="1102.5" stroke="#800040" stroke-width="1"/>
<line x1="646.5" y1="1064.5" x2="646.5" y2="1103" stroke="#800040" stroke-width="1"/>
<circle cx="1549.5" cy="772.7" r="3" stroke="#ff0000" stroke-width="1" fill="none"/>
<line x1="1549.5" y1="775.7" x2="1549.5" y2="778.7" stroke="#ff0000" stroke-width="1"/>
<line x1="1549.5" y1="778.7" x2="1549.5" y2="827" stroke="#800040" stroke-width="1"/>
<line x1="1311" y1="798.5" x2="1445" y2="798.5" stroke="#800040" stroke-width="1"/>
<line x1="1445" y1="798.5" x2="1454.5" y2="798.5" stroke="#ff0000" stroke-width="1"/>
<polyline points="1454.5,798.5 1457.33,801.5 1462.99,795.5 1468.65,801.5 1474.31,795.5 1479.97,801.5 1482.8,798.5" stroke="#0000ff" stroke-width="1.3" fill="none" stroke-linejoin="miter"/>
<line x1="1482.8" y1="798.5" x2="1492.3" y2="798.5" stroke="#ff0000" stroke-width="1"/>
<line x1="1492" y1="798.5" x2="1550" y2="798.5" stroke="#800040" stroke-width="1"/>
<line x1="1311" y1="826.5" x2="1445" y2="826.5" stroke="#800040" stroke-width="1"/>
<line x1="1445" y1="826.5" x2="1454.5" y2="826.5" stroke="#ff0000" stroke-width="1"/>
<polyline points="1454.5,826.5 1457.33,829.5 1462.99,823.5 1468.65,829.5 1474.31,823.5 1479.97,829.5 1482.8,826.5" stroke="#0000ff" stroke-width="1.3" fill="none" stroke-linejoin="miter"/>
<line x1="1482.8" y1="826.5" x2="1492.3" y2="826.5" stroke="#ff0000" stroke-width="1"/>
<line x1="1492" y1="826.5" x2="1550" y2="826.5" stroke="#800040" stroke-width="1"/>
<circle cx="1549.5" cy="798.5" r="2.15" fill="#ff00ff"/>
<line x1="1340.5" y1="902.5" x2="1340.5" y2="1017" stroke="#800040" stroke-width="1"/>
<line x1="1340" y1="902.5" x2="1378.5" y2="902.5" stroke="#800040" stroke-width="1"/>
<line x1="1378.5" y1="902.5" x2="1389" y2="902.5" stroke="#ff0000" stroke-width="1"/>
<line x1="1389.5" y1="894.5" x2="1389.5" y2="910.5" stroke="#0000ff" stroke-width="1"/>
<line x1="1395.5" y1="894.5" x2="1395.5" y2="910.5" stroke="#0000ff" stroke-width="1"/>
<line x1="1396" y1="902.5" x2="1406.5" y2="902.5" stroke="#ff0000" stroke-width="1"/>
<line x1="1406.5" y1="902.5" x2="1550" y2="902.5" stroke="#800040" stroke-width="1"/>
<line x1="1340" y1="921.5" x2="1378.5" y2="921.5" stroke="#800040" stroke-width="1"/>
<line x1="1378.5" y1="921.5" x2="1389" y2="921.5" stroke="#ff0000" stroke-width="1"/>
<line x1="1389.5" y1="913.5" x2="1389.5" y2="929.5" stroke="#0000ff" stroke-width="1"/>
<line x1="1395.5" y1="913.5" x2="1395.5" y2="929.5" stroke="#0000ff" stroke-width="1"/>
<line x1="1396" y1="921.5" x2="1406.5" y2="921.5" stroke="#ff0000" stroke-width="1"/>
<line x1="1406.5" y1="921.5" x2="1550" y2="921.5" stroke="#800040" stroke-width="1"/>
<line x1="1340" y1="941.5" x2="1378.5" y2="941.5" stroke="#800040" stroke-width="1"/>
<line x1="1378.5" y1="941.5" x2="1389" y2="941.5" stroke="#ff0000" stroke-width="1"/>
<line x1="1389.5" y1="933.5" x2="1389.5" y2="949.5" stroke="#0000ff" stroke-width="1"/>
<line x1="1395.5" y1="933.5" x2="1395.5" y2="949.5" stroke="#0000ff" stroke-width="1"/>
<line x1="1396" y1="941.5" x2="1406.5" y2="941.5" stroke="#ff0000" stroke-width="1"/>
<line x1="1406.5" y1="941.5" x2="1550" y2="941.5" stroke="#800040" stroke-width="1"/>
<line x1="1340" y1="959.5" x2="1378.5" y2="959.5" stroke="#800040" stroke-width="1"/>
<line x1="1378.5" y1="959.5" x2="1389" y2="959.5" stroke="#ff0000" stroke-width="1"/>
<line x1="1389.5" y1="951.5" x2="1389.5" y2="967.5" stroke="#0000ff" stroke-width="1"/>
<line x1="1395.5" y1="951.5" x2="1395.5" y2="967.5" stroke="#0000ff" stroke-width="1"/>
<line x1="1396" y1="959.5" x2="1406.5" y2="959.5" stroke="#ff0000" stroke-width="1"/>
<line x1="1406.5" y1="959.5" x2="1550" y2="959.5" stroke="#800040" stroke-width="1"/>
<line x1="1340" y1="978.5" x2="1378.5" y2="978.5" stroke="#800040" stroke-width="1"/>
<line x1="1378.5" y1="978.5" x2="1389" y2="978.5" stroke="#ff0000" stroke-width="1"/>
<line x1="1389.5" y1="970.5" x2="1389.5" y2="986.5" stroke="#0000ff" stroke-width="1"/>
<line x1="1395.5" y1="970.5" x2="1395.5" y2="986.5" stroke="#0000ff" stroke-width="1"/>
<line x1="1396" y1="978.5" x2="1406.5" y2="978.5" stroke="#ff0000" stroke-width="1"/>
<line x1="1406.5" y1="978.5" x2="1550" y2="978.5" stroke="#800040" stroke-width="1"/>
<line x1="1340" y1="998.5" x2="1378.5" y2="998.5" stroke="#800040" stroke-width="1"/>
<line x1="1378.5" y1="998.5" x2="1389" y2="998.5" stroke="#ff0000" stroke-width="1"/>
<line x1="1389.5" y1="990.5" x2="1389.5" y2="1006.5" stroke="#0000ff" stroke-width="1"/>
<line x1="1395.5" y1="990.5" x2="1395.5" y2="1006.5" stroke="#0000ff" stroke-width="1"/>
<line x1="1396" y1="998.5" x2="1406.5" y2="998.5" stroke="#ff0000" stroke-width="1"/>
<line x1="1406.5" y1="998.5" x2="1550" y2="998.5" stroke="#800040" stroke-width="1"/>
<circle cx="1340.5" cy="921.5" r="2.15" fill="#ff00ff"/>
<circle cx="1340.5" cy="941.5" r="2.15" fill="#ff00ff"/>
<circle cx="1340.5" cy="959.5" r="2.15" fill="#ff00ff"/>
<circle cx="1340.5" cy="978.5" r="2.15" fill="#ff00ff"/>
<circle cx="1340.5" cy="998.5" r="2.15" fill="#ff00ff"/>
<line x1="1330.5" y1="1016.8" x2="1350.5" y2="1016.8" stroke="#ff0000" stroke-width="1"/>
<line x1="1333.5" y1="1019.75" x2="1347.5" y2="1019.75" stroke="#ff0000" stroke-width="1"/>
<line x1="1336.3" y1="1022.7" x2="1344.7" y2="1022.7" stroke="#ff0000" stroke-width="1"/>
<line x1="1339.1" y1="1025.65" x2="1341.9" y2="1025.65" stroke="#ff0000" stroke-width="1"/>
<rect x="1264.5" y="1053.5" width="361" height="95" stroke="#000000" stroke-width="1.2" fill="none"/>
<line x1="1340.5" y1="1053" x2="1340.5" y2="1148" stroke="#000000" stroke-width="1.2"/>
<line x1="1340" y1="1110.5" x2="1625" y2="1110.5" stroke="#000000" stroke-width="1.2"/>
<line x1="1340" y1="1138.5" x2="1625" y2="1138.5" stroke="#000000" stroke-width="1.2"/>
<line x1="1378.5" y1="1110" x2="1378.5" y2="1138" stroke="#000000" stroke-width="1.2"/>
<line x1="1596.5" y1="1110" x2="1596.5" y2="1138" stroke="#000000" stroke-width="1.2"/>
<line x1="1492.5" y1="1138" x2="1492.5" y2="1148" stroke="#000000" stroke-width="1.2"/>
<path d="M 1297.5 1116.8 A 26.5 26.5 0 1 1 1324 1090.3 L 1315.1 1090.3 A 17.6 17.6 0 1 0 1297.5 1107.9 Z" fill="#0b3f94"/>
<clipPath id="lc"><circle cx="1323" cy="1089.3" r="27"/></clipPath>
<g clip-path="url(#lc)" fill="#e01b30"><rect x="1290" y="1092.9" width="45" height="5.9"/><rect x="1290" y="1101.4" width="45" height="6.5"/><rect x="1290" y="1110.5" width="45" height="6"/></g>
<rect x="609" y="950" width="1" height="1" fill="#fff"/>
<rect x="609" y="1007" width="1" height="1" fill="#fff"/>
<rect x="609" y="1064" width="1" height="1" fill="#fff"/>
<rect x="1124" y="630" width="4" height="1" fill="#8080ff" opacity="0.45"/>
<rect x="1124.5" y="633" width="5.5" height="1" fill="#8080ff" opacity="0.45"/>
<rect x="1135" y="629" width="6" height="1" fill="#8080ff" opacity="0.45"/>
<rect x="1136" y="634" width="6" height="1" fill="#8080ff" opacity="0.45"/>
<rect x="1147" y="628" width="5" height="1" fill="#8080ff" opacity="0.45"/>
<rect x="1148" y="635" width="4" height="1" fill="#8080ff" opacity="0.45"/>
<rect x="1158" y="628" width="6" height="1" fill="#8080ff" opacity="0.45"/>
<rect x="1159" y="635" width="5" height="1" fill="#8080ff" opacity="0.45"/>
<rect x="1262" y="628" width="6" height="1" fill="#8080ff" opacity="0.45"/>
<rect x="1262" y="635" width="7" height="1" fill="#8080ff" opacity="0.45"/>
<rect x="1274" y="628" width="5" height="1" fill="#8080ff" opacity="0.45"/>
<rect x="1274" y="635" width="4" height="1" fill="#8080ff" opacity="0.45"/>
<rect x="1285" y="629" width="5" height="1" fill="#8080ff" opacity="0.45"/>
<rect x="1285" y="634" width="6" height="1" fill="#8080ff" opacity="0.45"/>
<rect x="1297" y="630" width="3" height="1" fill="#8080ff" opacity="0.45"/>
<rect x="1298" y="631.5" width="3" height="1" fill="#8080ff" opacity="0.45"/></svg>
</body></html>
